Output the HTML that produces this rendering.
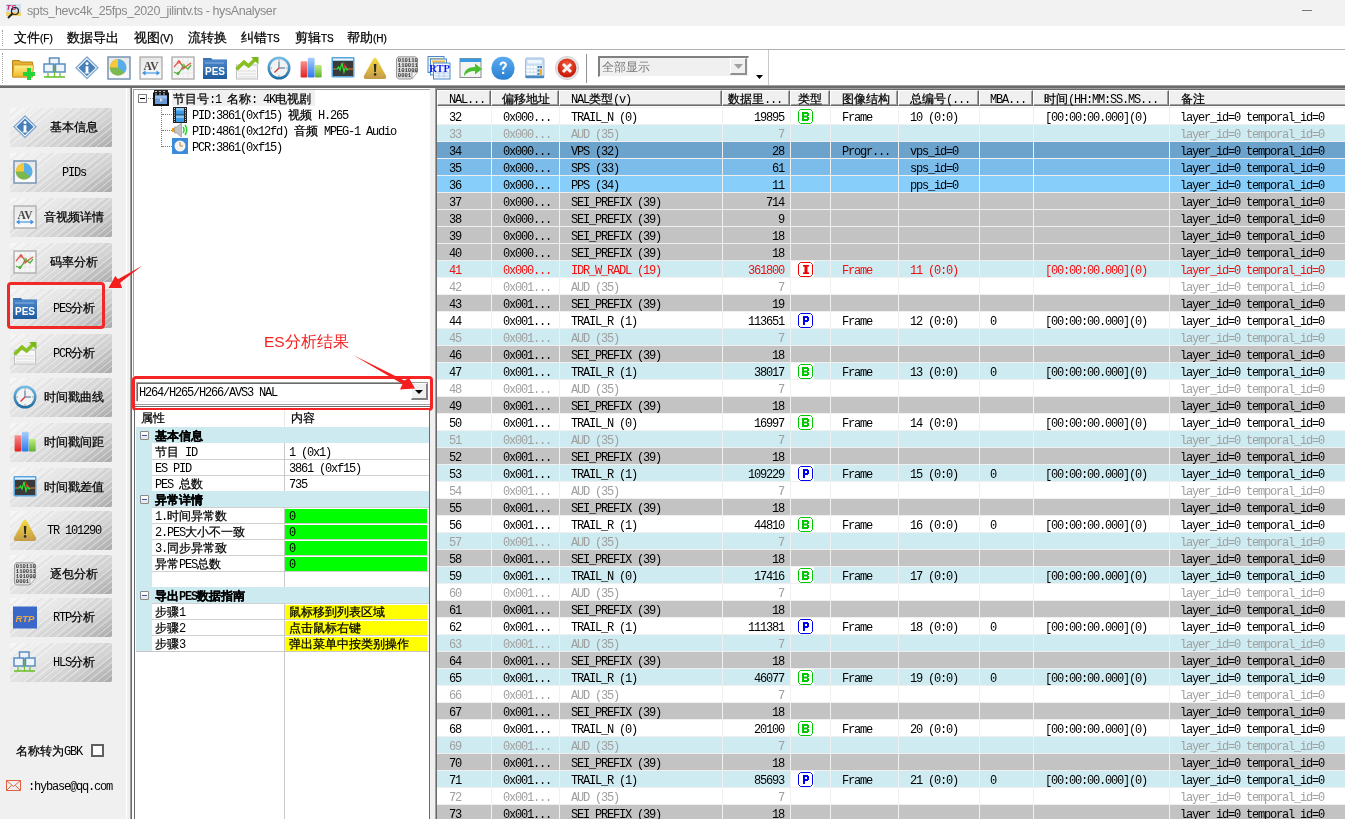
<!DOCTYPE html><html><head><meta charset="utf-8"><style>
*{box-sizing:border-box;margin:0;padding:0}
html,body{width:1345px;height:819px;overflow:hidden;background:#f0f0f0;font-family:"Liberation Sans",sans-serif;}
body{will-change:transform}
div{position:absolute;white-space:nowrap}
.a{font-family:"Liberation Mono",monospace;font-size:12px;letter-spacing:-1.2px}
.c{font-size:12px;font-family:"Liberation Sans",sans-serif;-webkit-text-stroke:0.25px currentColor}
.row{left:437px;width:908px;height:17px;line-height:16px}
.cell{top:0;height:16px;line-height:16px;overflow:hidden}
.nb{left:10px;width:102px;height:39px;background:linear-gradient(150deg,#f6f6f6 0%,#e6e6e6 35%,#d0d0d0 70%,#aaaaaa 100%)}
.nb:before{content:"";position:absolute;left:0;top:0;right:0;bottom:0;background:repeating-linear-gradient(141deg,rgba(255,255,255,0) 0px,rgba(255,255,255,0) 3px,rgba(255,255,255,.45) 4px,rgba(255,255,255,0) 5px),repeating-linear-gradient(141deg,rgba(0,0,0,0) 0px,rgba(0,0,0,0) 5px,rgba(0,0,0,.05) 6px,rgba(0,0,0,0) 7px)}
.nbt{top:0;height:39px;line-height:39px;left:26px;right:0;text-align:center;font-size:12px;color:#000}
svg{position:absolute}
</style></head><body>
<svg width="0" height="0" style="position:absolute"><defs><linearGradient id="gFold" x1="0" y1="0" x2="0" y2="1"><stop offset="0" stop-color="#fff08a"/><stop offset="1" stop-color="#f0b828"/></linearGradient><linearGradient id="gBox" x1="0" y1="0" x2="0" y2="1"><stop offset="0" stop-color="#e6e6e6"/><stop offset="1" stop-color="#fbfbfb"/></linearGradient><linearGradient id="gPes" x1="0" y1="0" x2="0" y2="1"><stop offset="0" stop-color="#4a86c8"/><stop offset="1" stop-color="#1f5a9e"/></linearGradient><linearGradient id="gWarn" x1="0" y1="0" x2="0" y2="1"><stop offset="0" stop-color="#f5dc40"/><stop offset="1" stop-color="#c49a48"/></linearGradient><linearGradient id="gRed" x1="0" y1="0" x2="0" y2="1"><stop offset="0" stop-color="#f89090"/><stop offset="1" stop-color="#e02020"/></linearGradient><linearGradient id="gBlue" x1="0" y1="0" x2="0" y2="1"><stop offset="0" stop-color="#a8d0ff"/><stop offset="1" stop-color="#2a7ae8"/></linearGradient><linearGradient id="gGreen" x1="0" y1="0" x2="0" y2="1"><stop offset="0" stop-color="#c0f080"/><stop offset="1" stop-color="#60b030"/></linearGradient><linearGradient id="gHelp" x1="0" y1="0" x2="0" y2="1"><stop offset="0" stop-color="#5aaaf0"/><stop offset="1" stop-color="#2a80d0"/></linearGradient><radialGradient id="gClose" cx=".5" cy=".35" r=".6"><stop offset="0" stop-color="#f86040"/><stop offset="1" stop-color="#c81808"/></radialGradient><linearGradient id="gClock" x1="0" y1="0" x2="0" y2="1"><stop offset="0" stop-color="#7ac0e8"/><stop offset="1" stop-color="#1a6aa0"/></linearGradient></defs></svg>
<div style="left:0;top:0;width:1345px;height:26px;background:#f2f2f2"></div>
<svg style="left:5px;top:2px" width="17" height="17" viewBox="0 0 17 17"><rect x="1" y="2" width="15" height="12" fill="#cfe0f0"/><rect x="1" y="10" width="15" height="4" fill="#f0d070"/><text x="1" y="8" font-family="Liberation Sans" font-weight="bold" font-style="italic" font-size="8" fill="#d02060">TS</text><circle cx="10" cy="9" r="3.5" fill="none" stroke="#222" stroke-width="1.2"/><path d="M7.5 11.5L3 16" stroke="#222" stroke-width="2"/></svg>
<div style="left:27px;top:4px;font-size:12.5px;letter-spacing:-0.4px;color:#8a8a8a">spts_hevc4k_25fps_2020_jilintv.ts - hysAnalyser</div>
<div style="left:1302px;top:10px;width:10px;height:1px;background:#777"></div>
<div style="left:0;top:26px;width:1345px;height:23px;background:#fff"></div>
<div style="left:0;top:49px;width:1345px;height:1px;background:#b0b0b0"></div>
<div style="left:2px;top:30px;width:1px;height:16px;border-left:1px dotted #a0a0a0"></div>
<div style="left:14px;top:30px;font-size:12.5px;color:#000;-webkit-text-stroke:0.25px #000">文件<span style="font-size:10px">(F)</span></div>
<div style="left:67px;top:30px;font-size:12.5px;color:#000;-webkit-text-stroke:0.25px #000">数据导出<span style="font-size:10px"></span></div>
<div style="left:134px;top:30px;font-size:12.5px;color:#000;-webkit-text-stroke:0.25px #000">视图<span style="font-size:10px">(V)</span></div>
<div style="left:188px;top:30px;font-size:12.5px;color:#000;-webkit-text-stroke:0.25px #000">流转换<span style="font-size:10px"></span></div>
<div style="left:241px;top:30px;font-size:12.5px;color:#000;-webkit-text-stroke:0.25px #000">纠错<span style="font-size:10px">TS</span></div>
<div style="left:295px;top:30px;font-size:12.5px;color:#000;-webkit-text-stroke:0.25px #000">剪辑<span style="font-size:10px">TS</span></div>
<div style="left:347px;top:30px;font-size:12.5px;color:#000;-webkit-text-stroke:0.25px #000">帮助<span style="font-size:10px">(H)</span></div>
<div style="left:0;top:50px;width:1345px;height:36px;background:#fff"></div>
<div style="left:2px;top:53px;width:1px;height:30px;border-left:1px dotted #a0a0a0"></div>
<div style="left:768px;top:50px;width:1px;height:36px;background:#c8c8c8"></div>
<svg style="left:11px;top:56px" width="24" height="24" viewBox="0 0 24 24"><path d="M1.5 4.5h7l1.5 1.5h11.5v15h-20z" fill="#e6b030" stroke="#b88418"/><path d="M3 9h19.5l-1 12H1.5z" fill="url(#gFold)" stroke="#c89420" stroke-width=".8"/><path d="M16 12h4v4h4v4h-4v4h-4v-4h-4v-4h4z" fill="#22d43a"/></svg>
<svg style="left:43px;top:56px" width="24" height="24" viewBox="0 0 24 24"><path d="M1 21h21" stroke="#70c030" stroke-width="1.6"/><path d="M5 17v4M11.5 10v11M17 17v4" stroke="#70c030" stroke-width="1.3"/><rect x="6.5" y="2" width="9.5" height="7" fill="#eef4fa" stroke="#5a8ec0" stroke-width="1.5"/><rect x="1" y="8" width="9.5" height="8" fill="#eef4fa" stroke="#5a8ec0" stroke-width="1.5"/><rect x="12.5" y="8" width="9.5" height="8" fill="#eef4fa" stroke="#5a8ec0" stroke-width="1.5"/></svg>
<svg style="left:75px;top:56px" width="24" height="24" viewBox="0 0 24 24"><path d="M12 .3L23.7 11.8 12 23.3 .3 11.8z" fill="#6a98c8" stroke="#a8c4e0" stroke-width=".6"/><path d="M12 2.6L21.4 11.8 12 21 2.6 11.8z" fill="none" stroke="#f4f8fc" stroke-width="1.1"/><path d="M12 3.8L20.2 11.8 12 19.8 3.8 11.8z" fill="#4a80b8"/><circle cx="12" cy="7.6" r="1.5" fill="#fff"/><path d="M10.6 10.2h2.8v6.2h1v1.1h-4.8v-1.1h1z" fill="#fff"/></svg>
<svg style="left:107px;top:56px" width="24" height="24" viewBox="0 0 24 24"><rect x="1" y="1" width="22" height="22" fill="url(#gBox)" stroke="#7f9ab8" stroke-width="1.6"/><circle cx="11" cy="11.5" r="8.3" fill="#7cb850"/><path d="M11 11.5V3.2a8.3 8.3 0 0 1 6.4 13.6z" fill="#58aee8"/><path d="M11 11.5V3.2a8.3 8.3 0 0 0-8.3 8.3z" fill="#f8c838"/></svg>
<svg style="left:139px;top:56px" width="24" height="24" viewBox="0 0 24 24"><rect x="1" y="1" width="22" height="22" fill="url(#gBox)" stroke="#b0b0b0" stroke-width="1.4"/><text x="12" y="13.5" font-family="Liberation Serif" font-weight="bold" font-size="11.5" text-anchor="middle" fill="#484848">AV</text><path d="M5 17h14" stroke="#60a8e8" stroke-width="1.4"/><path d="M3 17l3.5-2.5v5zM21 17l-3.5-2.5v5z" fill="#3a90e0"/></svg>
<svg style="left:171px;top:56px" width="24" height="24" viewBox="0 0 24 24"><rect x="1" y="1" width="22" height="22" fill="#f6f6f6" stroke="#b0b0b0" stroke-width="1.4"/><path d="M2 7h20M2 12h20M2 17h20M7 2v20M12 2v20M17 2v20" stroke="#e4e4e4" stroke-width=".7"/><path d="M3 11l5-6 5 7 4-3 3-2" stroke="#e05a4a" fill="none" stroke-width="1.3"/><path d="M3 16l4 2 6-8 4 3 3-4" stroke="#58b040" fill="none" stroke-width="1.3"/><circle cx="8" cy="6" r="1.2" fill="none" stroke="#e05a4a"/><circle cx="12" cy="12" r="1.2" fill="none" stroke="#e05a4a"/><circle cx="7" cy="17.5" r="1.2" fill="none" stroke="#58b040"/><circle cx="12.5" cy="9.5" r="1.2" fill="none" stroke="#58b040"/></svg>
<svg style="left:203px;top:56px" width="24" height="24" viewBox="0 0 24 24"><path d="M0 2h8l1.5 1.5H24V23H0z" fill="#3a74b8"/><rect x="0" y="4" width="24" height="19" rx="1" fill="url(#gPes)"/><path d="M2 7h19" stroke="#8ab4e0" stroke-width="1"/><text x="12" y="19" font-family="Liberation Sans" font-weight="bold" font-size="10" text-anchor="middle" fill="#fff">PES</text></svg>
<svg style="left:235px;top:56px" width="24" height="24" viewBox="0 0 24 24"><rect x="1.5" y="9" width="21" height="14" fill="#f8f8f8" stroke="#c0c0c0"/><path d="M3 15h18M3 18h18M3 21h18" stroke="#dcdcdc"/><path d="M1.5 13.5L9 6l4.5 4L20 3.5" stroke="#88c020" stroke-width="3.6" fill="none" stroke-linejoin="round"/><path d="M16 1h7.5v7.5z" fill="#78b818"/></svg>
<svg style="left:267px;top:56px" width="24" height="24" viewBox="0 0 24 24"><circle cx="12" cy="12" r="11.5" fill="url(#gClock)"/><circle cx="12" cy="12" r="9" fill="#f2f2f2"/><path d="M12 12V5.5M12 12h6" stroke="#7a98b0" stroke-width="1.5"/><path d="M12 12l-4.5 4.5" stroke="#d83030" stroke-width="1.2"/><path d="M12 3.5v1.2M12 19.3v1.2M3.5 12h1.2M19.3 12h1.2" stroke="#555" stroke-width=".8"/></svg>
<svg style="left:299px;top:56px" width="24" height="24" viewBox="0 0 24 24"><rect x="1.6" y="5.3" width="6.8" height="16.3" rx="1" fill="url(#gRed)"/><rect x="8.8" y="1.7" width="6.8" height="19.9" rx="1" fill="url(#gBlue)"/><rect x="15.9" y="8.9" width="6.8" height="12.7" rx="1" fill="url(#gGreen)"/></svg>
<svg style="left:331px;top:56px" width="24" height="24" viewBox="0 0 24 24"><rect x=".5" y="1" width="23" height="20.5" rx="1" fill="#5aa4dc"/><rect x="2" y="2.5" width="20" height="2" fill="#eaf4fc"/><rect x="2" y="5" width="20" height="15" fill="#3a3a3a"/><path d="M2 13h4l1.5-2 1.5 3 2-7 2 9 1.5-5 1.5 3 2-1h4" stroke="#30e030" fill="none" stroke-width="1.2"/><path d="M2 12.5h3M12.5 6l1.5 6 1.5-1 1.5 2h5" stroke="#e83030" fill="none" stroke-width="1"/></svg>
<svg style="left:363px;top:56px" width="24" height="24" viewBox="0 0 24 24"><path d="M12 1.8c.9 0 1.5.6 2 1.5l9 16.5c.8 1.6 0 3.2-1.8 3.2H2.8C1 23 .2 21.4 1 19.8l9-16.5c.5-.9 1.1-1.5 2-1.5z" fill="url(#gWarn)"/><path d="M10.8 8h2.6l-.5 8h-1.6z" fill="#2a2a2a"/><circle cx="12.1" cy="18.4" r="1.3" fill="#2a2a2a"/></svg>
<svg style="left:395px;top:56px" width="24" height="24" viewBox="0 0 24 24"><path d="M3 .8h17.5l2 2V16l-6.5 7H3.5L1.5 21V2.8z" fill="#dcdcdc" stroke="#9a9a9a" stroke-width="1"/><path d="M22.5 16H17v7z" fill="#f4f4f4" stroke="#a0a0a0" stroke-width=".8"/><g font-family="Liberation Mono" font-size="5.6" font-weight="bold" fill="#3a3a3a"><text x="2.8" y="6.2">010110</text><text x="2.8" y="11">110011</text><text x="2.8" y="15.8">101000</text><text x="2.8" y="20.6">0001</text></g></svg>
<svg style="left:427px;top:56px" width="24" height="24" viewBox="0 0 24 24"><rect x="1" y=".5" width="16" height="16" fill="#f0f6fc" stroke="#4a8ac8"/><rect x="2.5" y="2" width="13" height="2" fill="#f0b840"/><rect x="3.5" y="3" width="16" height="16" fill="#f0f6fc" stroke="#4a8ac8"/><rect x="5" y="4.5" width="13" height="2" fill="#f0b840"/><rect x="6.5" y="7" width="16.5" height="16" fill="#f0f6fc" stroke="#4a8ac8"/><path d="M8 17h14M8 20h14M12 15v8M17 15v8" stroke="#a8c8e8" stroke-width=".8"/><text x="12.5" y="16" font-family="Liberation Serif" font-weight="bold" font-size="10.5" text-anchor="middle" fill="#0a1ef0">RTP</text></svg>
<svg style="left:459px;top:56px" width="24" height="24" viewBox="0 0 24 24"><rect x="1" y="2.5" width="21" height="19" fill="#f4f4f4" stroke="#8a8a8a"/><rect x="1" y="2.5" width="21" height="3.5" fill="#3a9ae0"/><path d="M5 20c0-6 4.5-9 11-9V7.5l7 5.5-7 5.5V15c-5 0-8.5 1.5-11 5z" fill="#48c030"/></svg>
<svg style="left:491px;top:56px" width="24" height="24" viewBox="0 0 24 24"><rect x=".5" y=".8" width="23" height="23" rx="10.5" fill="url(#gHelp)"/><path d="M8.5 9.2c0-2.3 1.6-3.7 3.7-3.7 2.2 0 3.7 1.3 3.7 3.2 0 2.6-2.8 2.8-2.8 5.3h-2c0-3.3 2.6-3.300 2.6-5.2 0-.8-.6-1.4-1.5-1.4-1 0-1.6.7-1.6 1.8z" fill="#fff"/><rect x="11" y="15.8" width="2.2" height="2.2" fill="#fff"/></svg>
<svg style="left:523px;top:56px" width="24" height="24" viewBox="0 0 24 24"><rect x="2.5" y="2" width="18.5" height="20" rx="1.5" fill="#d4e6f6" stroke="#88aed4" stroke-width=".8"/><rect x="2.5" y="19.5" width="18.5" height="2.5" fill="#4a88c0"/><rect x="4" y="3.5" width="15.5" height="4.5" fill="#eef6fe" stroke="#a8c8e4" stroke-width=".6"/><g fill="#fff"><rect x="4" y="10" width="2.5" height="2"/><rect x="7.5" y="10" width="2.5" height="2"/><rect x="11" y="10" width="2.5" height="2"/><rect x="4" y="13.5" width="2.5" height="2"/><rect x="7.5" y="13.5" width="2.5" height="2"/><rect x="11" y="13.5" width="2.5" height="2"/><rect x="4" y="17" width="2.5" height="2"/><rect x="7.5" y="17" width="2.5" height="2"/><rect x="11" y="17" width="2.5" height="2"/></g><g fill="#4a7ab0"><rect x="14.5" y="10" width="2" height="2"/><rect x="17" y="10" width="2" height="2"/><rect x="14.5" y="13.5" width="2" height="2"/><rect x="14.5" y="17" width="2" height="2"/></g><rect x="17" y="13" width="2" height="6" fill="#f0b020"/></svg>
<svg style="left:555px;top:56px" width="24" height="24" viewBox="0 0 24 24"><circle cx="12" cy="12" r="11.6" fill="#e4e4e4" stroke="#c0c0c0" stroke-width=".6"/><circle cx="12" cy="12" r="9.4" fill="url(#gClose)"/><path d="M8 8l8 8M16 8l-8 8" stroke="#f4f4f4" stroke-width="3"/></svg>
<div style="left:586px;top:54px;width:1px;height:29px;background:#909090"></div>
<div style="left:598px;top:56px;width:151px;height:21px;background:#f0f0f0;border-top:2px solid #808080;border-left:2px solid #808080;border-right:1px solid #fff;border-bottom:1px solid #fff"></div>
<div style="left:602px;top:59px;font-size:12px;color:#777">全部显示</div>
<div style="left:730px;top:58px;width:17px;height:17px;background:#f0f0f0;border-left:1px solid #fff;border-top:1px solid #fff;border-right:2px solid #909090;border-bottom:2px solid #909090"></div>
<svg style="left:734px;top:64px" width="9" height="5" viewBox="0 0 9 5"><path d="M0 0h9L4.5 5z" fill="#a0a0a0"/></svg>
<svg style="left:756px;top:75px" width="7" height="4" viewBox="0 0 7 4"><path d="M0 0h7L3.5 4z" fill="#000"/></svg>
<div style="left:0;top:85px;width:1345px;height:1px;background:#a0a0a0"></div>
<div style="left:0;top:86px;width:1345px;height:2px;background:#6a6a6a"></div>
<div style="left:0;top:88px;width:126px;height:731px;background:#f0f0f0"></div>
<div style="left:126px;top:88px;width:1px;height:731px;background:#fff"></div>
<div class="nb" style="top:108px"><div class="nbt"><span class="c">基本信息</span></div></div>
<svg style="left:13px;top:115px" width="24" height="24" viewBox="0 0 24 24"><path d="M12 .3L23.7 11.8 12 23.3 .3 11.8z" fill="#6a98c8" stroke="#a8c4e0" stroke-width=".6"/><path d="M12 2.6L21.4 11.8 12 21 2.6 11.8z" fill="none" stroke="#f4f8fc" stroke-width="1.1"/><path d="M12 3.8L20.2 11.8 12 19.8 3.8 11.8z" fill="#4a80b8"/><circle cx="12" cy="7.6" r="1.5" fill="#fff"/><path d="M10.6 10.2h2.8v6.2h1v1.1h-4.8v-1.1h1z" fill="#fff"/></svg>
<div class="nb" style="top:153px"><div class="nbt"><span class="a">PIDs</span></div></div>
<svg style="left:13px;top:160px" width="24" height="24" viewBox="0 0 24 24"><rect x="1" y="1" width="22" height="22" fill="url(#gBox)" stroke="#7f9ab8" stroke-width="1.6"/><circle cx="11" cy="11.5" r="8.3" fill="#7cb850"/><path d="M11 11.5V3.2a8.3 8.3 0 0 1 6.4 13.6z" fill="#58aee8"/><path d="M11 11.5V3.2a8.3 8.3 0 0 0-8.3 8.3z" fill="#f8c838"/></svg>
<div class="nb" style="top:198px"><div class="nbt"><span class="c">音视频详情</span></div></div>
<svg style="left:13px;top:205px" width="24" height="24" viewBox="0 0 24 24"><rect x="1" y="1" width="22" height="22" fill="url(#gBox)" stroke="#b0b0b0" stroke-width="1.4"/><text x="12" y="13.5" font-family="Liberation Serif" font-weight="bold" font-size="11.5" text-anchor="middle" fill="#484848">AV</text><path d="M5 17h14" stroke="#60a8e8" stroke-width="1.4"/><path d="M3 17l3.5-2.5v5zM21 17l-3.5-2.5v5z" fill="#3a90e0"/></svg>
<div class="nb" style="top:243px"><div class="nbt"><span class="c">码率分析</span></div></div>
<svg style="left:13px;top:250px" width="24" height="24" viewBox="0 0 24 24"><rect x="1" y="1" width="22" height="22" fill="#f6f6f6" stroke="#b0b0b0" stroke-width="1.4"/><path d="M2 7h20M2 12h20M2 17h20M7 2v20M12 2v20M17 2v20" stroke="#e4e4e4" stroke-width=".7"/><path d="M3 11l5-6 5 7 4-3 3-2" stroke="#e05a4a" fill="none" stroke-width="1.3"/><path d="M3 16l4 2 6-8 4 3 3-4" stroke="#58b040" fill="none" stroke-width="1.3"/><circle cx="8" cy="6" r="1.2" fill="none" stroke="#e05a4a"/><circle cx="12" cy="12" r="1.2" fill="none" stroke="#e05a4a"/><circle cx="7" cy="17.5" r="1.2" fill="none" stroke="#58b040"/><circle cx="12.5" cy="9.5" r="1.2" fill="none" stroke="#58b040"/></svg>
<div class="nb" style="top:289px"><div class="nbt"><span class="a">PES</span><span class="c">分析</span></div></div>
<svg style="left:13px;top:296px" width="24" height="24" viewBox="0 0 24 24"><path d="M0 2h8l1.5 1.5H24V23H0z" fill="#3a74b8"/><rect x="0" y="4" width="24" height="19" rx="1" fill="url(#gPes)"/><path d="M2 7h19" stroke="#8ab4e0" stroke-width="1"/><text x="12" y="19" font-family="Liberation Sans" font-weight="bold" font-size="10" text-anchor="middle" fill="#fff">PES</text></svg>
<div class="nb" style="top:334px"><div class="nbt"><span class="a">PCR</span><span class="c">分析</span></div></div>
<svg style="left:13px;top:341px" width="24" height="24" viewBox="0 0 24 24"><rect x="1.5" y="9" width="21" height="14" fill="#f8f8f8" stroke="#c0c0c0"/><path d="M3 15h18M3 18h18M3 21h18" stroke="#dcdcdc"/><path d="M1.5 13.5L9 6l4.5 4L20 3.5" stroke="#88c020" stroke-width="3.6" fill="none" stroke-linejoin="round"/><path d="M16 1h7.5v7.5z" fill="#78b818"/></svg>
<div class="nb" style="top:378px"><div class="nbt"><span class="c">时间戳曲线</span></div></div>
<svg style="left:13px;top:385px" width="24" height="24" viewBox="0 0 24 24"><circle cx="12" cy="12" r="11.5" fill="url(#gClock)"/><circle cx="12" cy="12" r="9" fill="#f2f2f2"/><path d="M12 12V5.5M12 12h6" stroke="#7a98b0" stroke-width="1.5"/><path d="M12 12l-4.5 4.5" stroke="#d83030" stroke-width="1.2"/><path d="M12 3.5v1.2M12 19.3v1.2M3.5 12h1.2M19.3 12h1.2" stroke="#555" stroke-width=".8"/></svg>
<div class="nb" style="top:423px"><div class="nbt"><span class="c">时间戳间距</span></div></div>
<svg style="left:13px;top:430px" width="24" height="24" viewBox="0 0 24 24"><rect x="1.6" y="5.3" width="6.8" height="16.3" rx="1" fill="url(#gRed)"/><rect x="8.8" y="1.7" width="6.8" height="19.9" rx="1" fill="url(#gBlue)"/><rect x="15.9" y="8.9" width="6.8" height="12.7" rx="1" fill="url(#gGreen)"/></svg>
<div class="nb" style="top:468px"><div class="nbt"><span class="c">时间戳差值</span></div></div>
<svg style="left:13px;top:475px" width="24" height="24" viewBox="0 0 24 24"><rect x=".5" y="1" width="23" height="20.5" rx="1" fill="#5aa4dc"/><rect x="2" y="2.5" width="20" height="2" fill="#eaf4fc"/><rect x="2" y="5" width="20" height="15" fill="#3a3a3a"/><path d="M2 13h4l1.5-2 1.5 3 2-7 2 9 1.5-5 1.5 3 2-1h4" stroke="#30e030" fill="none" stroke-width="1.2"/><path d="M2 12.5h3M12.5 6l1.5 6 1.5-1 1.5 2h5" stroke="#e83030" fill="none" stroke-width="1"/></svg>
<div class="nb" style="top:511px"><div class="nbt"><span class="a">TR&nbsp;101290</span></div></div>
<svg style="left:13px;top:518px" width="24" height="24" viewBox="0 0 24 24"><path d="M12 1.8c.9 0 1.5.6 2 1.5l9 16.5c.8 1.6 0 3.2-1.8 3.2H2.8C1 23 .2 21.4 1 19.8l9-16.5c.5-.9 1.1-1.5 2-1.5z" fill="url(#gWarn)"/><path d="M10.8 8h2.6l-.5 8h-1.6z" fill="#2a2a2a"/><circle cx="12.1" cy="18.4" r="1.3" fill="#2a2a2a"/></svg>
<div class="nb" style="top:555px"><div class="nbt"><span class="c">逐包分析</span></div></div>
<svg style="left:13px;top:562px" width="24" height="24" viewBox="0 0 24 24"><path d="M3 .8h17.5l2 2V16l-6.5 7H3.5L1.5 21V2.8z" fill="#dcdcdc" stroke="#9a9a9a" stroke-width="1"/><path d="M22.5 16H17v7z" fill="#f4f4f4" stroke="#a0a0a0" stroke-width=".8"/><g font-family="Liberation Mono" font-size="5.6" font-weight="bold" fill="#3a3a3a"><text x="2.8" y="6.2">010110</text><text x="2.8" y="11">110011</text><text x="2.8" y="15.8">101000</text><text x="2.8" y="20.6">0001</text></g></svg>
<div class="nb" style="top:598px"><div class="nbt"><span class="a">RTP</span><span class="c">分析</span></div></div>
<svg style="left:13px;top:605px" width="24" height="24" viewBox="0 0 24 24"><rect x="0" y="1.5" width="24" height="22" fill="#3a68c8"/><text x="12" y="16.5" font-family="Liberation Sans" font-style="italic" font-weight="bold" font-size="9.5" text-anchor="middle" fill="#f5a838">RTP</text></svg>
<div class="nb" style="top:643px"><div class="nbt"><span class="a">HLS</span><span class="c">分析</span></div></div>
<svg style="left:13px;top:650px" width="24" height="24" viewBox="0 0 24 24"><path d="M1 21h21" stroke="#70c030" stroke-width="1.6"/><path d="M5 17v4M11.5 10v11M17 17v4" stroke="#70c030" stroke-width="1.3"/><rect x="6.5" y="2" width="9.5" height="7" fill="#eef4fa" stroke="#5a8ec0" stroke-width="1.5"/><rect x="1" y="8" width="9.5" height="8" fill="#eef4fa" stroke="#5a8ec0" stroke-width="1.5"/><rect x="12.5" y="8" width="9.5" height="8" fill="#eef4fa" stroke="#5a8ec0" stroke-width="1.5"/></svg>
<div style="left:7px;top:282px;width:98px;height:47px;border:3px solid #f02828;border-radius:4px"></div>
<div style="left:16px;top:743px;font-size:12px;color:#000"><span class="c">名称转为</span><span class="a">GBK</span></div>
<div style="left:91px;top:744px;width:13px;height:13px;background:#fff;border:2px solid #606060"></div>
<svg style="left:6px;top:780px" width="15" height="11" viewBox="0 0 15 11"><path d="M.5 .5h14v10H.5zM.5 .5l7 6 7-6M.5 10.5l5-5M14.5 10.5l-5-5" fill="none" stroke="#e06040" stroke-width="1"/></svg>
<div style="left:28px;top:776px;color:#000"><span class="a">:hybase@qq.com</span></div>
<div style="left:127px;top:88px;width:3px;height:731px;background:#f0f0f0"></div>
<div style="left:130px;top:88px;width:1px;height:731px;background:#a0a0a0"></div>
<div style="left:131px;top:88px;width:1px;height:731px;background:#6a6a6a"></div>
<div style="left:132px;top:88px;width:300px;height:731px;background:#fff"></div>
<div style="left:133px;top:89px;width:299px;height:287px;border-top:1px solid #a0a0a0;border-left:1px solid #a0a0a0;background:#fff"></div>
<div style="left:138px;top:94px;width:9px;height:9px;border:1px solid #808080;background:#fff"></div>
<div style="left:140px;top:98px;width:5px;height:1px;background:#000"></div>
<div style="left:148px;top:98px;width:5px;height:1px;border-top:1px dotted #808080"></div>
<div style="left:161px;top:106px;width:1px;height:41px;border-left:1px dotted #808080"></div>
<div style="left:162px;top:114px;width:10px;height:1px;border-top:1px dotted #808080"></div>
<div style="left:162px;top:130px;width:10px;height:1px;border-top:1px dotted #808080"></div>
<div style="left:162px;top:146px;width:10px;height:1px;border-top:1px dotted #808080"></div>
<svg style="left:153px;top:90px" width="16" height="16" viewBox="0 0 16 16"><rect x="0" y="2.5" width="16" height="13.5" fill="#111"/><rect x="1" y="0" width="14" height="3" fill="#222"/><path d="M2 1.5h2M6 1.5h2M10 1.5h2M2 4h2M6 4h2M10 4h2" stroke="#ccc" stroke-width="1"/><rect x="2" y="5.5" width="12" height="8.5" fill="#6a9ad8"/><rect x="2" y="5.5" width="12" height="3" fill="#9ac0f0"/><path d="M7 8l3 2-3 2z" fill="#dde"/></svg>
<div style="left:172px;top:90px;width:143px;height:16px;background:#f0f0f0"></div>
<div style="left:173px;top:90px;line-height:16px"><span class="c">节目号</span><span class="a">:1&nbsp;</span><span class="c">名称</span><span class="a">:&nbsp;4K</span><span class="c">电视剧</span></div>
<svg style="left:173px;top:107px" width="14" height="16" viewBox="0 0 14 16"><rect x="0" y="0" width="14" height="16" fill="#222"/><rect x="3" y="1" width="8" height="6.5" fill="#3a9ae8"/><rect x="3" y="1" width="8" height="2.5" fill="#8ac8f8"/><rect x="3" y="8.5" width="8" height="6.5" fill="#3a9ae8"/><rect x="3" y="8.5" width="8" height="2.5" fill="#8ac8f8"/><path d="M1.5 1v14M12.5 1v14" stroke="#ddd" stroke-width="1" stroke-dasharray="1 1.2"/></svg>
<div style="left:192px;top:106px;line-height:16px"><span class="a">PID:3861(0xf15)&nbsp;</span><span class="c">视频</span><span class="a">&nbsp;H.265</span></div>
<svg style="left:172px;top:122px" width="17" height="16" viewBox="0 0 17 16"><rect x="0" y="6" width="3" height="4" fill="#f0a020"/><path d="M2.5 5h2l5-4v14l-5-4h-2z" fill="#c4c4c4" stroke="#8a8a8a" stroke-width=".6"/><path d="M11 5q2 3 0 6M13 3q3.5 5 0 10" stroke="#38d038" stroke-width="1.6" fill="none"/></svg>
<div style="left:192px;top:122px;line-height:16px"><span class="a">PID:4861(0x12fd)&nbsp;</span><span class="c">音频</span><span class="a">&nbsp;MPEG-1&nbsp;Audio</span></div>
<svg style="left:172px;top:138px" width="16" height="16" viewBox="0 0 16 16"><rect x="0" y="0" width="16" height="16" fill="#3a8ad8"/><circle cx="8" cy="8" r="5.5" fill="#f4f4f4"/><path d="M8 8V4M8 8h3" stroke="#c08040" stroke-width="1"/></svg>
<div style="left:192px;top:138px;line-height:16px"><span class="a">PCR:3861(0xf15)</span></div>
<div style="left:430px;top:88px;width:2px;height:731px;background:#f0f0f0"></div>
<div style="left:432px;top:88px;width:3px;height:731px;background:#f0f0f0"></div>
<div style="left:264px;top:332px;font-size:15.5px;color:#f52020">ES分析结果</div>
<div style="left:133px;top:376px;width:299px;height:35px;background:#fff"></div>
<div style="left:136px;top:400px;width:293px;height:2px;background:#f0f0f0"></div>
<div style="left:136px;top:382px;width:292px;height:19px;background:#fff;border-top:1px solid #a0a0a0;border-left:1px solid #a0a0a0;box-shadow:inset 1px 1px 0 #6a6a6a"></div>
<div style="left:139px;top:383px;line-height:16px"><span class="a">H264/H265/H266/AVS3&nbsp;NAL</span></div>
<div style="left:411px;top:383px;width:17px;height:17px;background:#f0f0f0;border-left:1px solid #fff;border-top:1px solid #fff;border-right:2px solid #808080;border-bottom:2px solid #808080"></div>
<svg style="left:415px;top:390px" width="8" height="4" viewBox="0 0 8 4"><path d="M0 0h8L4 4z" fill="#000"/></svg>
<div style="left:134px;top:404px;width:296px;height:1px;background:#a0a0a0"></div>
<div style="left:134px;top:406px;width:296px;height:1px;background:#6a6a6a"></div>
<div style="left:132px;top:376px;width:301px;height:35px;border:3px solid #f52525;border-radius:4px"></div>
<div style="left:134px;top:410px;width:296px;height:409px;background:#fff;border-left:1px solid #6a6a6a;border-right:1px solid #6a6a6a"></div>
<div style="left:141px;top:409px;line-height:16px"><span class="c">属性</span></div>
<div style="left:291px;top:409px;line-height:16px"><span class="c">内容</span></div>
<div style="left:284px;top:410px;width:1px;height:17px;background:#e8e8e8"></div>
<div style="left:136px;top:427px;width:16px;height:224px;background:#cdeaf1"></div>
<div style="left:136px;top:427px;width:293px;height:16px;background:#cdeaf1"></div>
<div style="left:140px;top:431px;width:9px;height:9px;border:1px solid #8a8a8a;border-radius:1px;background:linear-gradient(#fff,#e4e4e4)"></div>
<div style="left:142px;top:435px;width:5px;height:1px;background:#3a58b0"></div>
<div style="left:155px;top:427px;line-height:16px;font-weight:bold"><span class="c">基本信息</span></div>
<div style="left:155px;top:443px;line-height:16px"><span class="c">节目</span><span class="a">&nbsp;ID</span></div>
<div style="left:289px;top:443px;line-height:16px"><span class="a">1&nbsp;(0x1)</span></div>
<div style="left:152px;top:459px;width:277px;height:1px;background:#d0d0d0"></div>
<div style="left:155px;top:459px;line-height:16px"><span class="a">ES&nbsp;PID</span></div>
<div style="left:289px;top:459px;line-height:16px"><span class="a">3861&nbsp;(0xf15)</span></div>
<div style="left:152px;top:475px;width:277px;height:1px;background:#d0d0d0"></div>
<div style="left:155px;top:475px;line-height:16px"><span class="a">PES&nbsp;</span><span class="c">总数</span></div>
<div style="left:289px;top:475px;line-height:16px"><span class="a">735</span></div>
<div style="left:136px;top:491px;width:293px;height:16px;background:#cdeaf1"></div>
<div style="left:140px;top:495px;width:9px;height:9px;border:1px solid #8a8a8a;border-radius:1px;background:linear-gradient(#fff,#e4e4e4)"></div>
<div style="left:142px;top:499px;width:5px;height:1px;background:#3a58b0"></div>
<div style="left:155px;top:491px;line-height:16px;font-weight:bold"><span class="c">异常详情</span></div>
<div style="left:152px;top:507px;width:277px;height:1px;background:#d0d0d0"></div>
<div style="left:155px;top:507px;line-height:16px"><span class="a">1.</span><span class="c">时间异常数</span></div>
<div style="left:285px;top:509px;width:142px;height:14px;background:#00ff00"></div>
<div style="left:289px;top:507px;line-height:16px"><span class="a">0</span></div>
<div style="left:152px;top:523px;width:277px;height:1px;background:#d0d0d0"></div>
<div style="left:155px;top:523px;line-height:16px"><span class="a">2.PES</span><span class="c">大小不一致</span></div>
<div style="left:285px;top:525px;width:142px;height:14px;background:#00ff00"></div>
<div style="left:289px;top:523px;line-height:16px"><span class="a">0</span></div>
<div style="left:152px;top:539px;width:277px;height:1px;background:#d0d0d0"></div>
<div style="left:155px;top:539px;line-height:16px"><span class="a">3.</span><span class="c">同步异常致</span></div>
<div style="left:285px;top:541px;width:142px;height:14px;background:#00ff00"></div>
<div style="left:289px;top:539px;line-height:16px"><span class="a">0</span></div>
<div style="left:152px;top:555px;width:277px;height:1px;background:#d0d0d0"></div>
<div style="left:155px;top:555px;line-height:16px"><span class="c">异常</span><span class="a">PES</span><span class="c">总数</span></div>
<div style="left:285px;top:557px;width:142px;height:14px;background:#00ff00"></div>
<div style="left:289px;top:555px;line-height:16px"><span class="a">0</span></div>
<div style="left:152px;top:571px;width:277px;height:1px;background:#d0d0d0"></div>
<div style="left:155px;top:571px;line-height:16px"></div>
<div style="left:289px;top:571px;line-height:16px"></div>
<div style="left:136px;top:587px;width:293px;height:16px;background:#cdeaf1"></div>
<div style="left:140px;top:591px;width:9px;height:9px;border:1px solid #8a8a8a;border-radius:1px;background:linear-gradient(#fff,#e4e4e4)"></div>
<div style="left:142px;top:595px;width:5px;height:1px;background:#3a58b0"></div>
<div style="left:155px;top:587px;line-height:16px;font-weight:bold"><span class="c">导出</span><span class="a">PES</span><span class="c">数据指南</span></div>
<div style="left:152px;top:603px;width:277px;height:1px;background:#d0d0d0"></div>
<div style="left:155px;top:603px;line-height:16px"><span class="c">步骤</span><span class="a">1</span></div>
<div style="left:285px;top:605px;width:142px;height:14px;background:#ffff00"></div>
<div style="left:289px;top:603px;line-height:16px"><span class="c">鼠标移到列表区域</span></div>
<div style="left:152px;top:619px;width:277px;height:1px;background:#d0d0d0"></div>
<div style="left:155px;top:619px;line-height:16px"><span class="c">步骤</span><span class="a">2</span></div>
<div style="left:285px;top:621px;width:142px;height:14px;background:#ffff00"></div>
<div style="left:289px;top:619px;line-height:16px"><span class="c">点击鼠标右键</span></div>
<div style="left:152px;top:635px;width:277px;height:1px;background:#d0d0d0"></div>
<div style="left:155px;top:635px;line-height:16px"><span class="c">步骤</span><span class="a">3</span></div>
<div style="left:285px;top:637px;width:142px;height:14px;background:#ffff00"></div>
<div style="left:289px;top:635px;line-height:16px"><span class="c">弹出菜单中按类别操作</span></div>
<div style="left:136px;top:651px;width:293px;height:1px;background:#c8c8c8"></div>
<div style="left:284px;top:443px;width:1px;height:16px;background:#c8c8c8"></div>
<div style="left:284px;top:459px;width:1px;height:16px;background:#c8c8c8"></div>
<div style="left:284px;top:475px;width:1px;height:16px;background:#c8c8c8"></div>
<div style="left:284px;top:507px;width:1px;height:16px;background:#c8c8c8"></div>
<div style="left:284px;top:523px;width:1px;height:16px;background:#c8c8c8"></div>
<div style="left:284px;top:539px;width:1px;height:16px;background:#c8c8c8"></div>
<div style="left:284px;top:555px;width:1px;height:16px;background:#c8c8c8"></div>
<div style="left:284px;top:571px;width:1px;height:16px;background:#c8c8c8"></div>
<div style="left:284px;top:603px;width:1px;height:16px;background:#c8c8c8"></div>
<div style="left:284px;top:619px;width:1px;height:16px;background:#c8c8c8"></div>
<div style="left:284px;top:635px;width:1px;height:16px;background:#c8c8c8"></div>
<div style="left:284px;top:651px;width:1px;height:168px;background:#c8c8c8"></div>
<div style="left:435px;top:88px;width:910px;height:731px;background:#fff;border-left:1px solid #a0a0a0;border-top:1px solid #a0a0a0"></div>
<div style="left:436px;top:89px;width:909px;height:730px;border-left:1px solid #6a6a6a;border-top:1px solid #6a6a6a"></div>
<div style="left:437px;top:90px;width:54px;height:16px;background:#f0f0f0;border-left:1px solid #fff;border-top:1px solid #fff;border-right:1px solid #6a6a6a;border-bottom:1px solid #6a6a6a;box-shadow:inset -1px -1px 0 #a0a0a0"></div>
<div style="left:449px;top:89px;line-height:17px"><span class="a">NAL...</span></div>
<div style="left:491px;top:90px;width:68px;height:16px;background:#f0f0f0;border-left:1px solid #fff;border-top:1px solid #fff;border-right:1px solid #6a6a6a;border-bottom:1px solid #6a6a6a;box-shadow:inset -1px -1px 0 #a0a0a0"></div>
<div style="left:502px;top:89px;line-height:17px"><span class="c">偏移地址</span></div>
<div style="left:559px;top:90px;width:163px;height:16px;background:#f0f0f0;border-left:1px solid #fff;border-top:1px solid #fff;border-right:1px solid #6a6a6a;border-bottom:1px solid #6a6a6a;box-shadow:inset -1px -1px 0 #a0a0a0"></div>
<div style="left:571px;top:89px;line-height:17px"><span class="a">NAL</span><span class="c">类型</span><span class="a">(v)</span></div>
<div style="left:722px;top:90px;width:68px;height:16px;background:#f0f0f0;border-left:1px solid #fff;border-top:1px solid #fff;border-right:1px solid #6a6a6a;border-bottom:1px solid #6a6a6a;box-shadow:inset -1px -1px 0 #a0a0a0"></div>
<div style="left:728px;top:89px;line-height:17px"><span class="c">数据里</span><span class="a">...</span></div>
<div style="left:790px;top:90px;width:40px;height:16px;background:#f0f0f0;border-left:1px solid #fff;border-top:1px solid #fff;border-right:1px solid #6a6a6a;border-bottom:1px solid #6a6a6a;box-shadow:inset -1px -1px 0 #a0a0a0"></div>
<div style="left:798px;top:89px;line-height:17px"><span class="c">类型</span></div>
<div style="left:830px;top:90px;width:68px;height:16px;background:#f0f0f0;border-left:1px solid #fff;border-top:1px solid #fff;border-right:1px solid #6a6a6a;border-bottom:1px solid #6a6a6a;box-shadow:inset -1px -1px 0 #a0a0a0"></div>
<div style="left:842px;top:89px;line-height:17px"><span class="c">图像结构</span></div>
<div style="left:898px;top:90px;width:81px;height:16px;background:#f0f0f0;border-left:1px solid #fff;border-top:1px solid #fff;border-right:1px solid #6a6a6a;border-bottom:1px solid #6a6a6a;box-shadow:inset -1px -1px 0 #a0a0a0"></div>
<div style="left:910px;top:89px;line-height:17px"><span class="c">总编号</span><span class="a">(...</span></div>
<div style="left:979px;top:90px;width:54px;height:16px;background:#f0f0f0;border-left:1px solid #fff;border-top:1px solid #fff;border-right:1px solid #6a6a6a;border-bottom:1px solid #6a6a6a;box-shadow:inset -1px -1px 0 #a0a0a0"></div>
<div style="left:990px;top:89px;line-height:17px"><span class="a">MBA...</span></div>
<div style="left:1033px;top:90px;width:136px;height:16px;background:#f0f0f0;border-left:1px solid #fff;border-top:1px solid #fff;border-right:1px solid #6a6a6a;border-bottom:1px solid #6a6a6a;box-shadow:inset -1px -1px 0 #a0a0a0"></div>
<div style="left:1044px;top:89px;line-height:17px"><span class="c">时间</span><span class="a">(HH:MM:SS.MS...</span></div>
<div style="left:1169px;top:90px;width:231px;height:16px;background:#f0f0f0;border-left:1px solid #fff;border-top:1px solid #fff;border-right:1px solid #6a6a6a;border-bottom:1px solid #6a6a6a;box-shadow:inset -1px -1px 0 #a0a0a0"></div>
<div style="left:1181px;top:89px;line-height:17px"><span class="c">备注</span></div>
<div style="left:437px;top:107px;width:908px;height:1px;background:#f0f0f0"></div>
<div class="row" style="top:108px;background:#ffffff;color:#000">
<div style="left:0;top:16px;width:908px;height:1px;background:#f0f0f0"></div>
<div style="left:54px;top:0;width:1px;height:16px;background:#f0f0f0"></div>
<div style="left:122px;top:0;width:1px;height:16px;background:#f0f0f0"></div>
<div style="left:285px;top:0;width:1px;height:16px;background:#f0f0f0"></div>
<div style="left:353px;top:0;width:1px;height:16px;background:#f0f0f0"></div>
<div style="left:393px;top:0;width:1px;height:16px;background:#f0f0f0"></div>
<div style="left:461px;top:0;width:1px;height:16px;background:#f0f0f0"></div>
<div style="left:542px;top:0;width:1px;height:16px;background:#f0f0f0"></div>
<div style="left:596px;top:0;width:1px;height:16px;background:#f0f0f0"></div>
<div style="left:732px;top:0;width:1px;height:16px;background:#f0f0f0"></div>
<div style="left:12px;top:0;line-height:16px"><span class="a">32</span></div>
<div style="left:66px;top:0;line-height:16px"><span class="a">0x000...</span></div>
<div style="left:134px;top:0;line-height:16px"><span class="a">TRAIL_N&nbsp;(0)</span></div>
<div style="left:285px;top:0;width:62px;text-align:right;line-height:16px"><span class="a">19895</span></div>
<div style="left:354px;top:0;width:23px;height:16px;background:#fff"></div>
<svg style="left:361px;top:0" width="16" height="16" viewBox="0 0 16 16"><path d="M2.5 1.5H12.5L14.5 3.5V13.5L12.5 15.5H2.5L0.5 13.5V3.5Z" fill="#fff" stroke="#00c800" stroke-width="1"/><g fill="#00c800"><rect x="4" y="4" width="2" height="9"/><rect x="4" y="4" width="6" height="2"/><rect x="9" y="5" width="2" height="3"/><rect x="4" y="7.5" width="6" height="2"/><rect x="9" y="9" width="2" height="3"/><rect x="4" y="11" width="6" height="2"/></g></svg>
<div style="left:405px;top:0;line-height:16px"><span class="a">Frame</span></div>
<div style="left:473px;top:0;line-height:16px"><span class="a">10&nbsp;(0:0)</span></div>
<div style="left:608px;top:0;line-height:16px"><span class="a">[00:00:00.000](0)</span></div>
<div style="left:743px;top:0;line-height:16px"><span class="a">layer_id=0&nbsp;temporal_id=0</span></div>
</div>
<div class="row" style="top:125px;background:#cdebf1;color:#a0a0a0">
<div style="left:0;top:16px;width:908px;height:1px;background:#f0f0f0"></div>
<div style="left:54px;top:0;width:1px;height:16px;background:#f0f0f0"></div>
<div style="left:122px;top:0;width:1px;height:16px;background:#f0f0f0"></div>
<div style="left:285px;top:0;width:1px;height:16px;background:#f0f0f0"></div>
<div style="left:353px;top:0;width:1px;height:16px;background:#f0f0f0"></div>
<div style="left:393px;top:0;width:1px;height:16px;background:#f0f0f0"></div>
<div style="left:461px;top:0;width:1px;height:16px;background:#f0f0f0"></div>
<div style="left:542px;top:0;width:1px;height:16px;background:#f0f0f0"></div>
<div style="left:596px;top:0;width:1px;height:16px;background:#f0f0f0"></div>
<div style="left:732px;top:0;width:1px;height:16px;background:#f0f0f0"></div>
<div style="left:12px;top:0;line-height:16px"><span class="a">33</span></div>
<div style="left:66px;top:0;line-height:16px"><span class="a">0x000...</span></div>
<div style="left:134px;top:0;line-height:16px"><span class="a">AUD&nbsp;(35)</span></div>
<div style="left:285px;top:0;width:62px;text-align:right;line-height:16px"><span class="a">7</span></div>
<div style="left:743px;top:0;line-height:16px"><span class="a">layer_id=0&nbsp;temporal_id=0</span></div>
</div>
<div class="row" style="top:142px;background:#6ca3cc;color:#000">
<div style="left:0;top:16px;width:908px;height:1px;background:#f0f0f0"></div>
<div style="left:54px;top:0;width:1px;height:16px;background:#f0f0f0"></div>
<div style="left:122px;top:0;width:1px;height:16px;background:#f0f0f0"></div>
<div style="left:285px;top:0;width:1px;height:16px;background:#f0f0f0"></div>
<div style="left:353px;top:0;width:1px;height:16px;background:#f0f0f0"></div>
<div style="left:393px;top:0;width:1px;height:16px;background:#f0f0f0"></div>
<div style="left:461px;top:0;width:1px;height:16px;background:#f0f0f0"></div>
<div style="left:542px;top:0;width:1px;height:16px;background:#f0f0f0"></div>
<div style="left:596px;top:0;width:1px;height:16px;background:#f0f0f0"></div>
<div style="left:732px;top:0;width:1px;height:16px;background:#f0f0f0"></div>
<div style="left:12px;top:0;line-height:16px"><span class="a">34</span></div>
<div style="left:66px;top:0;line-height:16px"><span class="a">0x000...</span></div>
<div style="left:134px;top:0;line-height:16px"><span class="a">VPS&nbsp;(32)</span></div>
<div style="left:285px;top:0;width:62px;text-align:right;line-height:16px"><span class="a">28</span></div>
<div style="left:405px;top:0;line-height:16px"><span class="a">Progr...</span></div>
<div style="left:473px;top:0;line-height:16px"><span class="a">vps_id=0</span></div>
<div style="left:743px;top:0;line-height:16px"><span class="a">layer_id=0&nbsp;temporal_id=0</span></div>
</div>
<div class="row" style="top:159px;background:#7bbcea;color:#000">
<div style="left:0;top:16px;width:908px;height:1px;background:#f0f0f0"></div>
<div style="left:54px;top:0;width:1px;height:16px;background:#f0f0f0"></div>
<div style="left:122px;top:0;width:1px;height:16px;background:#f0f0f0"></div>
<div style="left:285px;top:0;width:1px;height:16px;background:#f0f0f0"></div>
<div style="left:353px;top:0;width:1px;height:16px;background:#f0f0f0"></div>
<div style="left:393px;top:0;width:1px;height:16px;background:#f0f0f0"></div>
<div style="left:461px;top:0;width:1px;height:16px;background:#f0f0f0"></div>
<div style="left:542px;top:0;width:1px;height:16px;background:#f0f0f0"></div>
<div style="left:596px;top:0;width:1px;height:16px;background:#f0f0f0"></div>
<div style="left:732px;top:0;width:1px;height:16px;background:#f0f0f0"></div>
<div style="left:12px;top:0;line-height:16px"><span class="a">35</span></div>
<div style="left:66px;top:0;line-height:16px"><span class="a">0x000...</span></div>
<div style="left:134px;top:0;line-height:16px"><span class="a">SPS&nbsp;(33)</span></div>
<div style="left:285px;top:0;width:62px;text-align:right;line-height:16px"><span class="a">61</span></div>
<div style="left:473px;top:0;line-height:16px"><span class="a">sps_id=0</span></div>
<div style="left:743px;top:0;line-height:16px"><span class="a">layer_id=0&nbsp;temporal_id=0</span></div>
</div>
<div class="row" style="top:176px;background:#87cefa;color:#000">
<div style="left:0;top:16px;width:908px;height:1px;background:#f0f0f0"></div>
<div style="left:54px;top:0;width:1px;height:16px;background:#f0f0f0"></div>
<div style="left:122px;top:0;width:1px;height:16px;background:#f0f0f0"></div>
<div style="left:285px;top:0;width:1px;height:16px;background:#f0f0f0"></div>
<div style="left:353px;top:0;width:1px;height:16px;background:#f0f0f0"></div>
<div style="left:393px;top:0;width:1px;height:16px;background:#f0f0f0"></div>
<div style="left:461px;top:0;width:1px;height:16px;background:#f0f0f0"></div>
<div style="left:542px;top:0;width:1px;height:16px;background:#f0f0f0"></div>
<div style="left:596px;top:0;width:1px;height:16px;background:#f0f0f0"></div>
<div style="left:732px;top:0;width:1px;height:16px;background:#f0f0f0"></div>
<div style="left:12px;top:0;line-height:16px"><span class="a">36</span></div>
<div style="left:66px;top:0;line-height:16px"><span class="a">0x000...</span></div>
<div style="left:134px;top:0;line-height:16px"><span class="a">PPS&nbsp;(34)</span></div>
<div style="left:285px;top:0;width:62px;text-align:right;line-height:16px"><span class="a">11</span></div>
<div style="left:473px;top:0;line-height:16px"><span class="a">pps_id=0</span></div>
<div style="left:743px;top:0;line-height:16px"><span class="a">layer_id=0&nbsp;temporal_id=0</span></div>
</div>
<div class="row" style="top:193px;background:#c3c3c3;color:#000">
<div style="left:0;top:16px;width:908px;height:1px;background:#f0f0f0"></div>
<div style="left:54px;top:0;width:1px;height:16px;background:#f0f0f0"></div>
<div style="left:122px;top:0;width:1px;height:16px;background:#f0f0f0"></div>
<div style="left:285px;top:0;width:1px;height:16px;background:#f0f0f0"></div>
<div style="left:353px;top:0;width:1px;height:16px;background:#f0f0f0"></div>
<div style="left:393px;top:0;width:1px;height:16px;background:#f0f0f0"></div>
<div style="left:461px;top:0;width:1px;height:16px;background:#f0f0f0"></div>
<div style="left:542px;top:0;width:1px;height:16px;background:#f0f0f0"></div>
<div style="left:596px;top:0;width:1px;height:16px;background:#f0f0f0"></div>
<div style="left:732px;top:0;width:1px;height:16px;background:#f0f0f0"></div>
<div style="left:12px;top:0;line-height:16px"><span class="a">37</span></div>
<div style="left:66px;top:0;line-height:16px"><span class="a">0x000...</span></div>
<div style="left:134px;top:0;line-height:16px"><span class="a">SEI_PREFIX&nbsp;(39)</span></div>
<div style="left:285px;top:0;width:62px;text-align:right;line-height:16px"><span class="a">714</span></div>
<div style="left:743px;top:0;line-height:16px"><span class="a">layer_id=0&nbsp;temporal_id=0</span></div>
</div>
<div class="row" style="top:210px;background:#c3c3c3;color:#000">
<div style="left:0;top:16px;width:908px;height:1px;background:#f0f0f0"></div>
<div style="left:54px;top:0;width:1px;height:16px;background:#f0f0f0"></div>
<div style="left:122px;top:0;width:1px;height:16px;background:#f0f0f0"></div>
<div style="left:285px;top:0;width:1px;height:16px;background:#f0f0f0"></div>
<div style="left:353px;top:0;width:1px;height:16px;background:#f0f0f0"></div>
<div style="left:393px;top:0;width:1px;height:16px;background:#f0f0f0"></div>
<div style="left:461px;top:0;width:1px;height:16px;background:#f0f0f0"></div>
<div style="left:542px;top:0;width:1px;height:16px;background:#f0f0f0"></div>
<div style="left:596px;top:0;width:1px;height:16px;background:#f0f0f0"></div>
<div style="left:732px;top:0;width:1px;height:16px;background:#f0f0f0"></div>
<div style="left:12px;top:0;line-height:16px"><span class="a">38</span></div>
<div style="left:66px;top:0;line-height:16px"><span class="a">0x000...</span></div>
<div style="left:134px;top:0;line-height:16px"><span class="a">SEI_PREFIX&nbsp;(39)</span></div>
<div style="left:285px;top:0;width:62px;text-align:right;line-height:16px"><span class="a">9</span></div>
<div style="left:743px;top:0;line-height:16px"><span class="a">layer_id=0&nbsp;temporal_id=0</span></div>
</div>
<div class="row" style="top:227px;background:#c3c3c3;color:#000">
<div style="left:0;top:16px;width:908px;height:1px;background:#f0f0f0"></div>
<div style="left:54px;top:0;width:1px;height:16px;background:#f0f0f0"></div>
<div style="left:122px;top:0;width:1px;height:16px;background:#f0f0f0"></div>
<div style="left:285px;top:0;width:1px;height:16px;background:#f0f0f0"></div>
<div style="left:353px;top:0;width:1px;height:16px;background:#f0f0f0"></div>
<div style="left:393px;top:0;width:1px;height:16px;background:#f0f0f0"></div>
<div style="left:461px;top:0;width:1px;height:16px;background:#f0f0f0"></div>
<div style="left:542px;top:0;width:1px;height:16px;background:#f0f0f0"></div>
<div style="left:596px;top:0;width:1px;height:16px;background:#f0f0f0"></div>
<div style="left:732px;top:0;width:1px;height:16px;background:#f0f0f0"></div>
<div style="left:12px;top:0;line-height:16px"><span class="a">39</span></div>
<div style="left:66px;top:0;line-height:16px"><span class="a">0x000...</span></div>
<div style="left:134px;top:0;line-height:16px"><span class="a">SEI_PREFIX&nbsp;(39)</span></div>
<div style="left:285px;top:0;width:62px;text-align:right;line-height:16px"><span class="a">18</span></div>
<div style="left:743px;top:0;line-height:16px"><span class="a">layer_id=0&nbsp;temporal_id=0</span></div>
</div>
<div class="row" style="top:244px;background:#c3c3c3;color:#000">
<div style="left:0;top:16px;width:908px;height:1px;background:#f0f0f0"></div>
<div style="left:54px;top:0;width:1px;height:16px;background:#f0f0f0"></div>
<div style="left:122px;top:0;width:1px;height:16px;background:#f0f0f0"></div>
<div style="left:285px;top:0;width:1px;height:16px;background:#f0f0f0"></div>
<div style="left:353px;top:0;width:1px;height:16px;background:#f0f0f0"></div>
<div style="left:393px;top:0;width:1px;height:16px;background:#f0f0f0"></div>
<div style="left:461px;top:0;width:1px;height:16px;background:#f0f0f0"></div>
<div style="left:542px;top:0;width:1px;height:16px;background:#f0f0f0"></div>
<div style="left:596px;top:0;width:1px;height:16px;background:#f0f0f0"></div>
<div style="left:732px;top:0;width:1px;height:16px;background:#f0f0f0"></div>
<div style="left:12px;top:0;line-height:16px"><span class="a">40</span></div>
<div style="left:66px;top:0;line-height:16px"><span class="a">0x000...</span></div>
<div style="left:134px;top:0;line-height:16px"><span class="a">SEI_PREFIX&nbsp;(39)</span></div>
<div style="left:285px;top:0;width:62px;text-align:right;line-height:16px"><span class="a">18</span></div>
<div style="left:743px;top:0;line-height:16px"><span class="a">layer_id=0&nbsp;temporal_id=0</span></div>
</div>
<div class="row" style="top:261px;background:#cdebf1;color:#f01010">
<div style="left:0;top:16px;width:908px;height:1px;background:#f0f0f0"></div>
<div style="left:54px;top:0;width:1px;height:16px;background:#f0f0f0"></div>
<div style="left:122px;top:0;width:1px;height:16px;background:#f0f0f0"></div>
<div style="left:285px;top:0;width:1px;height:16px;background:#f0f0f0"></div>
<div style="left:353px;top:0;width:1px;height:16px;background:#f0f0f0"></div>
<div style="left:393px;top:0;width:1px;height:16px;background:#f0f0f0"></div>
<div style="left:461px;top:0;width:1px;height:16px;background:#f0f0f0"></div>
<div style="left:542px;top:0;width:1px;height:16px;background:#f0f0f0"></div>
<div style="left:596px;top:0;width:1px;height:16px;background:#f0f0f0"></div>
<div style="left:732px;top:0;width:1px;height:16px;background:#f0f0f0"></div>
<div style="left:12px;top:0;line-height:16px"><span class="a">41</span></div>
<div style="left:66px;top:0;line-height:16px"><span class="a">0x000...</span></div>
<div style="left:134px;top:0;line-height:16px"><span class="a">IDR_W_RADL&nbsp;(19)</span></div>
<div style="left:285px;top:0;width:62px;text-align:right;line-height:16px"><span class="a">361800</span></div>
<div style="left:354px;top:0;width:23px;height:16px;background:#fff"></div>
<svg style="left:361px;top:0" width="16" height="16" viewBox="0 0 16 16"><path d="M2.5 1.5H12.5L14.5 3.5V13.5L12.5 15.5H2.5L0.5 13.5V3.5Z" fill="#fff" stroke="#f00000" stroke-width="1"/><g fill="#f00000"><rect x="5" y="4" width="6" height="1.6"/><rect x="6.5" y="4" width="3" height="9"/><rect x="5" y="11.4" width="6" height="1.6"/></g></svg>
<div style="left:405px;top:0;line-height:16px"><span class="a">Frame</span></div>
<div style="left:473px;top:0;line-height:16px"><span class="a">11&nbsp;(0:0)</span></div>
<div style="left:608px;top:0;line-height:16px"><span class="a">[00:00:00.000](0)</span></div>
<div style="left:743px;top:0;line-height:16px"><span class="a">layer_id=0&nbsp;temporal_id=0</span></div>
</div>
<div class="row" style="top:278px;background:#ffffff;color:#a0a0a0">
<div style="left:0;top:16px;width:908px;height:1px;background:#f0f0f0"></div>
<div style="left:54px;top:0;width:1px;height:16px;background:#f0f0f0"></div>
<div style="left:122px;top:0;width:1px;height:16px;background:#f0f0f0"></div>
<div style="left:285px;top:0;width:1px;height:16px;background:#f0f0f0"></div>
<div style="left:353px;top:0;width:1px;height:16px;background:#f0f0f0"></div>
<div style="left:393px;top:0;width:1px;height:16px;background:#f0f0f0"></div>
<div style="left:461px;top:0;width:1px;height:16px;background:#f0f0f0"></div>
<div style="left:542px;top:0;width:1px;height:16px;background:#f0f0f0"></div>
<div style="left:596px;top:0;width:1px;height:16px;background:#f0f0f0"></div>
<div style="left:732px;top:0;width:1px;height:16px;background:#f0f0f0"></div>
<div style="left:12px;top:0;line-height:16px"><span class="a">42</span></div>
<div style="left:66px;top:0;line-height:16px"><span class="a">0x001...</span></div>
<div style="left:134px;top:0;line-height:16px"><span class="a">AUD&nbsp;(35)</span></div>
<div style="left:285px;top:0;width:62px;text-align:right;line-height:16px"><span class="a">7</span></div>
<div style="left:743px;top:0;line-height:16px"><span class="a">layer_id=0&nbsp;temporal_id=0</span></div>
</div>
<div class="row" style="top:295px;background:#c3c3c3;color:#000">
<div style="left:0;top:16px;width:908px;height:1px;background:#f0f0f0"></div>
<div style="left:54px;top:0;width:1px;height:16px;background:#f0f0f0"></div>
<div style="left:122px;top:0;width:1px;height:16px;background:#f0f0f0"></div>
<div style="left:285px;top:0;width:1px;height:16px;background:#f0f0f0"></div>
<div style="left:353px;top:0;width:1px;height:16px;background:#f0f0f0"></div>
<div style="left:393px;top:0;width:1px;height:16px;background:#f0f0f0"></div>
<div style="left:461px;top:0;width:1px;height:16px;background:#f0f0f0"></div>
<div style="left:542px;top:0;width:1px;height:16px;background:#f0f0f0"></div>
<div style="left:596px;top:0;width:1px;height:16px;background:#f0f0f0"></div>
<div style="left:732px;top:0;width:1px;height:16px;background:#f0f0f0"></div>
<div style="left:12px;top:0;line-height:16px"><span class="a">43</span></div>
<div style="left:66px;top:0;line-height:16px"><span class="a">0x001...</span></div>
<div style="left:134px;top:0;line-height:16px"><span class="a">SEI_PREFIX&nbsp;(39)</span></div>
<div style="left:285px;top:0;width:62px;text-align:right;line-height:16px"><span class="a">19</span></div>
<div style="left:743px;top:0;line-height:16px"><span class="a">layer_id=0&nbsp;temporal_id=0</span></div>
</div>
<div class="row" style="top:312px;background:#ffffff;color:#000">
<div style="left:0;top:16px;width:908px;height:1px;background:#f0f0f0"></div>
<div style="left:54px;top:0;width:1px;height:16px;background:#f0f0f0"></div>
<div style="left:122px;top:0;width:1px;height:16px;background:#f0f0f0"></div>
<div style="left:285px;top:0;width:1px;height:16px;background:#f0f0f0"></div>
<div style="left:353px;top:0;width:1px;height:16px;background:#f0f0f0"></div>
<div style="left:393px;top:0;width:1px;height:16px;background:#f0f0f0"></div>
<div style="left:461px;top:0;width:1px;height:16px;background:#f0f0f0"></div>
<div style="left:542px;top:0;width:1px;height:16px;background:#f0f0f0"></div>
<div style="left:596px;top:0;width:1px;height:16px;background:#f0f0f0"></div>
<div style="left:732px;top:0;width:1px;height:16px;background:#f0f0f0"></div>
<div style="left:12px;top:0;line-height:16px"><span class="a">44</span></div>
<div style="left:66px;top:0;line-height:16px"><span class="a">0x001...</span></div>
<div style="left:134px;top:0;line-height:16px"><span class="a">TRAIL_R&nbsp;(1)</span></div>
<div style="left:285px;top:0;width:62px;text-align:right;line-height:16px"><span class="a">113651</span></div>
<div style="left:354px;top:0;width:23px;height:16px;background:#fff"></div>
<svg style="left:361px;top:0" width="16" height="16" viewBox="0 0 16 16"><path d="M2.5 1.5H12.5L14.5 3.5V13.5L12.5 15.5H2.5L0.5 13.5V3.5Z" fill="#fff" stroke="#0000f0" stroke-width="1"/><g fill="#0000f0"><rect x="5" y="4" width="2" height="9"/><rect x="5" y="4" width="5" height="2"/><rect x="9" y="5" width="2" height="4"/><rect x="5" y="8" width="5" height="2"/></g></svg>
<div style="left:405px;top:0;line-height:16px"><span class="a">Frame</span></div>
<div style="left:473px;top:0;line-height:16px"><span class="a">12&nbsp;(0:0)</span></div>
<div style="left:553px;top:0;line-height:16px"><span class="a">0</span></div>
<div style="left:608px;top:0;line-height:16px"><span class="a">[00:00:00.000](0)</span></div>
<div style="left:743px;top:0;line-height:16px"><span class="a">layer_id=0&nbsp;temporal_id=0</span></div>
</div>
<div class="row" style="top:329px;background:#cdebf1;color:#a0a0a0">
<div style="left:0;top:16px;width:908px;height:1px;background:#f0f0f0"></div>
<div style="left:54px;top:0;width:1px;height:16px;background:#f0f0f0"></div>
<div style="left:122px;top:0;width:1px;height:16px;background:#f0f0f0"></div>
<div style="left:285px;top:0;width:1px;height:16px;background:#f0f0f0"></div>
<div style="left:353px;top:0;width:1px;height:16px;background:#f0f0f0"></div>
<div style="left:393px;top:0;width:1px;height:16px;background:#f0f0f0"></div>
<div style="left:461px;top:0;width:1px;height:16px;background:#f0f0f0"></div>
<div style="left:542px;top:0;width:1px;height:16px;background:#f0f0f0"></div>
<div style="left:596px;top:0;width:1px;height:16px;background:#f0f0f0"></div>
<div style="left:732px;top:0;width:1px;height:16px;background:#f0f0f0"></div>
<div style="left:12px;top:0;line-height:16px"><span class="a">45</span></div>
<div style="left:66px;top:0;line-height:16px"><span class="a">0x001...</span></div>
<div style="left:134px;top:0;line-height:16px"><span class="a">AUD&nbsp;(35)</span></div>
<div style="left:285px;top:0;width:62px;text-align:right;line-height:16px"><span class="a">7</span></div>
<div style="left:743px;top:0;line-height:16px"><span class="a">layer_id=0&nbsp;temporal_id=0</span></div>
</div>
<div class="row" style="top:346px;background:#c3c3c3;color:#000">
<div style="left:0;top:16px;width:908px;height:1px;background:#f0f0f0"></div>
<div style="left:54px;top:0;width:1px;height:16px;background:#f0f0f0"></div>
<div style="left:122px;top:0;width:1px;height:16px;background:#f0f0f0"></div>
<div style="left:285px;top:0;width:1px;height:16px;background:#f0f0f0"></div>
<div style="left:353px;top:0;width:1px;height:16px;background:#f0f0f0"></div>
<div style="left:393px;top:0;width:1px;height:16px;background:#f0f0f0"></div>
<div style="left:461px;top:0;width:1px;height:16px;background:#f0f0f0"></div>
<div style="left:542px;top:0;width:1px;height:16px;background:#f0f0f0"></div>
<div style="left:596px;top:0;width:1px;height:16px;background:#f0f0f0"></div>
<div style="left:732px;top:0;width:1px;height:16px;background:#f0f0f0"></div>
<div style="left:12px;top:0;line-height:16px"><span class="a">46</span></div>
<div style="left:66px;top:0;line-height:16px"><span class="a">0x001...</span></div>
<div style="left:134px;top:0;line-height:16px"><span class="a">SEI_PREFIX&nbsp;(39)</span></div>
<div style="left:285px;top:0;width:62px;text-align:right;line-height:16px"><span class="a">18</span></div>
<div style="left:743px;top:0;line-height:16px"><span class="a">layer_id=0&nbsp;temporal_id=0</span></div>
</div>
<div class="row" style="top:363px;background:#cdebf1;color:#000">
<div style="left:0;top:16px;width:908px;height:1px;background:#f0f0f0"></div>
<div style="left:54px;top:0;width:1px;height:16px;background:#f0f0f0"></div>
<div style="left:122px;top:0;width:1px;height:16px;background:#f0f0f0"></div>
<div style="left:285px;top:0;width:1px;height:16px;background:#f0f0f0"></div>
<div style="left:353px;top:0;width:1px;height:16px;background:#f0f0f0"></div>
<div style="left:393px;top:0;width:1px;height:16px;background:#f0f0f0"></div>
<div style="left:461px;top:0;width:1px;height:16px;background:#f0f0f0"></div>
<div style="left:542px;top:0;width:1px;height:16px;background:#f0f0f0"></div>
<div style="left:596px;top:0;width:1px;height:16px;background:#f0f0f0"></div>
<div style="left:732px;top:0;width:1px;height:16px;background:#f0f0f0"></div>
<div style="left:12px;top:0;line-height:16px"><span class="a">47</span></div>
<div style="left:66px;top:0;line-height:16px"><span class="a">0x001...</span></div>
<div style="left:134px;top:0;line-height:16px"><span class="a">TRAIL_R&nbsp;(1)</span></div>
<div style="left:285px;top:0;width:62px;text-align:right;line-height:16px"><span class="a">38017</span></div>
<div style="left:354px;top:0;width:23px;height:16px;background:#fff"></div>
<svg style="left:361px;top:0" width="16" height="16" viewBox="0 0 16 16"><path d="M2.5 1.5H12.5L14.5 3.5V13.5L12.5 15.5H2.5L0.5 13.5V3.5Z" fill="#fff" stroke="#00c800" stroke-width="1"/><g fill="#00c800"><rect x="4" y="4" width="2" height="9"/><rect x="4" y="4" width="6" height="2"/><rect x="9" y="5" width="2" height="3"/><rect x="4" y="7.5" width="6" height="2"/><rect x="9" y="9" width="2" height="3"/><rect x="4" y="11" width="6" height="2"/></g></svg>
<div style="left:405px;top:0;line-height:16px"><span class="a">Frame</span></div>
<div style="left:473px;top:0;line-height:16px"><span class="a">13&nbsp;(0:0)</span></div>
<div style="left:553px;top:0;line-height:16px"><span class="a">0</span></div>
<div style="left:608px;top:0;line-height:16px"><span class="a">[00:00:00.000](0)</span></div>
<div style="left:743px;top:0;line-height:16px"><span class="a">layer_id=0&nbsp;temporal_id=0</span></div>
</div>
<div class="row" style="top:380px;background:#ffffff;color:#a0a0a0">
<div style="left:0;top:16px;width:908px;height:1px;background:#f0f0f0"></div>
<div style="left:54px;top:0;width:1px;height:16px;background:#f0f0f0"></div>
<div style="left:122px;top:0;width:1px;height:16px;background:#f0f0f0"></div>
<div style="left:285px;top:0;width:1px;height:16px;background:#f0f0f0"></div>
<div style="left:353px;top:0;width:1px;height:16px;background:#f0f0f0"></div>
<div style="left:393px;top:0;width:1px;height:16px;background:#f0f0f0"></div>
<div style="left:461px;top:0;width:1px;height:16px;background:#f0f0f0"></div>
<div style="left:542px;top:0;width:1px;height:16px;background:#f0f0f0"></div>
<div style="left:596px;top:0;width:1px;height:16px;background:#f0f0f0"></div>
<div style="left:732px;top:0;width:1px;height:16px;background:#f0f0f0"></div>
<div style="left:12px;top:0;line-height:16px"><span class="a">48</span></div>
<div style="left:66px;top:0;line-height:16px"><span class="a">0x001...</span></div>
<div style="left:134px;top:0;line-height:16px"><span class="a">AUD&nbsp;(35)</span></div>
<div style="left:285px;top:0;width:62px;text-align:right;line-height:16px"><span class="a">7</span></div>
<div style="left:743px;top:0;line-height:16px"><span class="a">layer_id=0&nbsp;temporal_id=0</span></div>
</div>
<div class="row" style="top:397px;background:#c3c3c3;color:#000">
<div style="left:0;top:16px;width:908px;height:1px;background:#f0f0f0"></div>
<div style="left:54px;top:0;width:1px;height:16px;background:#f0f0f0"></div>
<div style="left:122px;top:0;width:1px;height:16px;background:#f0f0f0"></div>
<div style="left:285px;top:0;width:1px;height:16px;background:#f0f0f0"></div>
<div style="left:353px;top:0;width:1px;height:16px;background:#f0f0f0"></div>
<div style="left:393px;top:0;width:1px;height:16px;background:#f0f0f0"></div>
<div style="left:461px;top:0;width:1px;height:16px;background:#f0f0f0"></div>
<div style="left:542px;top:0;width:1px;height:16px;background:#f0f0f0"></div>
<div style="left:596px;top:0;width:1px;height:16px;background:#f0f0f0"></div>
<div style="left:732px;top:0;width:1px;height:16px;background:#f0f0f0"></div>
<div style="left:12px;top:0;line-height:16px"><span class="a">49</span></div>
<div style="left:66px;top:0;line-height:16px"><span class="a">0x001...</span></div>
<div style="left:134px;top:0;line-height:16px"><span class="a">SEI_PREFIX&nbsp;(39)</span></div>
<div style="left:285px;top:0;width:62px;text-align:right;line-height:16px"><span class="a">18</span></div>
<div style="left:743px;top:0;line-height:16px"><span class="a">layer_id=0&nbsp;temporal_id=0</span></div>
</div>
<div class="row" style="top:414px;background:#ffffff;color:#000">
<div style="left:0;top:16px;width:908px;height:1px;background:#f0f0f0"></div>
<div style="left:54px;top:0;width:1px;height:16px;background:#f0f0f0"></div>
<div style="left:122px;top:0;width:1px;height:16px;background:#f0f0f0"></div>
<div style="left:285px;top:0;width:1px;height:16px;background:#f0f0f0"></div>
<div style="left:353px;top:0;width:1px;height:16px;background:#f0f0f0"></div>
<div style="left:393px;top:0;width:1px;height:16px;background:#f0f0f0"></div>
<div style="left:461px;top:0;width:1px;height:16px;background:#f0f0f0"></div>
<div style="left:542px;top:0;width:1px;height:16px;background:#f0f0f0"></div>
<div style="left:596px;top:0;width:1px;height:16px;background:#f0f0f0"></div>
<div style="left:732px;top:0;width:1px;height:16px;background:#f0f0f0"></div>
<div style="left:12px;top:0;line-height:16px"><span class="a">50</span></div>
<div style="left:66px;top:0;line-height:16px"><span class="a">0x001...</span></div>
<div style="left:134px;top:0;line-height:16px"><span class="a">TRAIL_N&nbsp;(0)</span></div>
<div style="left:285px;top:0;width:62px;text-align:right;line-height:16px"><span class="a">16997</span></div>
<div style="left:354px;top:0;width:23px;height:16px;background:#fff"></div>
<svg style="left:361px;top:0" width="16" height="16" viewBox="0 0 16 16"><path d="M2.5 1.5H12.5L14.5 3.5V13.5L12.5 15.5H2.5L0.5 13.5V3.5Z" fill="#fff" stroke="#00c800" stroke-width="1"/><g fill="#00c800"><rect x="4" y="4" width="2" height="9"/><rect x="4" y="4" width="6" height="2"/><rect x="9" y="5" width="2" height="3"/><rect x="4" y="7.5" width="6" height="2"/><rect x="9" y="9" width="2" height="3"/><rect x="4" y="11" width="6" height="2"/></g></svg>
<div style="left:405px;top:0;line-height:16px"><span class="a">Frame</span></div>
<div style="left:473px;top:0;line-height:16px"><span class="a">14&nbsp;(0:0)</span></div>
<div style="left:608px;top:0;line-height:16px"><span class="a">[00:00:00.000](0)</span></div>
<div style="left:743px;top:0;line-height:16px"><span class="a">layer_id=0&nbsp;temporal_id=0</span></div>
</div>
<div class="row" style="top:431px;background:#cdebf1;color:#a0a0a0">
<div style="left:0;top:16px;width:908px;height:1px;background:#f0f0f0"></div>
<div style="left:54px;top:0;width:1px;height:16px;background:#f0f0f0"></div>
<div style="left:122px;top:0;width:1px;height:16px;background:#f0f0f0"></div>
<div style="left:285px;top:0;width:1px;height:16px;background:#f0f0f0"></div>
<div style="left:353px;top:0;width:1px;height:16px;background:#f0f0f0"></div>
<div style="left:393px;top:0;width:1px;height:16px;background:#f0f0f0"></div>
<div style="left:461px;top:0;width:1px;height:16px;background:#f0f0f0"></div>
<div style="left:542px;top:0;width:1px;height:16px;background:#f0f0f0"></div>
<div style="left:596px;top:0;width:1px;height:16px;background:#f0f0f0"></div>
<div style="left:732px;top:0;width:1px;height:16px;background:#f0f0f0"></div>
<div style="left:12px;top:0;line-height:16px"><span class="a">51</span></div>
<div style="left:66px;top:0;line-height:16px"><span class="a">0x001...</span></div>
<div style="left:134px;top:0;line-height:16px"><span class="a">AUD&nbsp;(35)</span></div>
<div style="left:285px;top:0;width:62px;text-align:right;line-height:16px"><span class="a">7</span></div>
<div style="left:743px;top:0;line-height:16px"><span class="a">layer_id=0&nbsp;temporal_id=0</span></div>
</div>
<div class="row" style="top:448px;background:#c3c3c3;color:#000">
<div style="left:0;top:16px;width:908px;height:1px;background:#f0f0f0"></div>
<div style="left:54px;top:0;width:1px;height:16px;background:#f0f0f0"></div>
<div style="left:122px;top:0;width:1px;height:16px;background:#f0f0f0"></div>
<div style="left:285px;top:0;width:1px;height:16px;background:#f0f0f0"></div>
<div style="left:353px;top:0;width:1px;height:16px;background:#f0f0f0"></div>
<div style="left:393px;top:0;width:1px;height:16px;background:#f0f0f0"></div>
<div style="left:461px;top:0;width:1px;height:16px;background:#f0f0f0"></div>
<div style="left:542px;top:0;width:1px;height:16px;background:#f0f0f0"></div>
<div style="left:596px;top:0;width:1px;height:16px;background:#f0f0f0"></div>
<div style="left:732px;top:0;width:1px;height:16px;background:#f0f0f0"></div>
<div style="left:12px;top:0;line-height:16px"><span class="a">52</span></div>
<div style="left:66px;top:0;line-height:16px"><span class="a">0x001...</span></div>
<div style="left:134px;top:0;line-height:16px"><span class="a">SEI_PREFIX&nbsp;(39)</span></div>
<div style="left:285px;top:0;width:62px;text-align:right;line-height:16px"><span class="a">18</span></div>
<div style="left:743px;top:0;line-height:16px"><span class="a">layer_id=0&nbsp;temporal_id=0</span></div>
</div>
<div class="row" style="top:465px;background:#cdebf1;color:#000">
<div style="left:0;top:16px;width:908px;height:1px;background:#f0f0f0"></div>
<div style="left:54px;top:0;width:1px;height:16px;background:#f0f0f0"></div>
<div style="left:122px;top:0;width:1px;height:16px;background:#f0f0f0"></div>
<div style="left:285px;top:0;width:1px;height:16px;background:#f0f0f0"></div>
<div style="left:353px;top:0;width:1px;height:16px;background:#f0f0f0"></div>
<div style="left:393px;top:0;width:1px;height:16px;background:#f0f0f0"></div>
<div style="left:461px;top:0;width:1px;height:16px;background:#f0f0f0"></div>
<div style="left:542px;top:0;width:1px;height:16px;background:#f0f0f0"></div>
<div style="left:596px;top:0;width:1px;height:16px;background:#f0f0f0"></div>
<div style="left:732px;top:0;width:1px;height:16px;background:#f0f0f0"></div>
<div style="left:12px;top:0;line-height:16px"><span class="a">53</span></div>
<div style="left:66px;top:0;line-height:16px"><span class="a">0x001...</span></div>
<div style="left:134px;top:0;line-height:16px"><span class="a">TRAIL_R&nbsp;(1)</span></div>
<div style="left:285px;top:0;width:62px;text-align:right;line-height:16px"><span class="a">109229</span></div>
<div style="left:354px;top:0;width:23px;height:16px;background:#fff"></div>
<svg style="left:361px;top:0" width="16" height="16" viewBox="0 0 16 16"><path d="M2.5 1.5H12.5L14.5 3.5V13.5L12.5 15.5H2.5L0.5 13.5V3.5Z" fill="#fff" stroke="#0000f0" stroke-width="1"/><g fill="#0000f0"><rect x="5" y="4" width="2" height="9"/><rect x="5" y="4" width="5" height="2"/><rect x="9" y="5" width="2" height="4"/><rect x="5" y="8" width="5" height="2"/></g></svg>
<div style="left:405px;top:0;line-height:16px"><span class="a">Frame</span></div>
<div style="left:473px;top:0;line-height:16px"><span class="a">15&nbsp;(0:0)</span></div>
<div style="left:553px;top:0;line-height:16px"><span class="a">0</span></div>
<div style="left:608px;top:0;line-height:16px"><span class="a">[00:00:00.000](0)</span></div>
<div style="left:743px;top:0;line-height:16px"><span class="a">layer_id=0&nbsp;temporal_id=0</span></div>
</div>
<div class="row" style="top:482px;background:#ffffff;color:#a0a0a0">
<div style="left:0;top:16px;width:908px;height:1px;background:#f0f0f0"></div>
<div style="left:54px;top:0;width:1px;height:16px;background:#f0f0f0"></div>
<div style="left:122px;top:0;width:1px;height:16px;background:#f0f0f0"></div>
<div style="left:285px;top:0;width:1px;height:16px;background:#f0f0f0"></div>
<div style="left:353px;top:0;width:1px;height:16px;background:#f0f0f0"></div>
<div style="left:393px;top:0;width:1px;height:16px;background:#f0f0f0"></div>
<div style="left:461px;top:0;width:1px;height:16px;background:#f0f0f0"></div>
<div style="left:542px;top:0;width:1px;height:16px;background:#f0f0f0"></div>
<div style="left:596px;top:0;width:1px;height:16px;background:#f0f0f0"></div>
<div style="left:732px;top:0;width:1px;height:16px;background:#f0f0f0"></div>
<div style="left:12px;top:0;line-height:16px"><span class="a">54</span></div>
<div style="left:66px;top:0;line-height:16px"><span class="a">0x001...</span></div>
<div style="left:134px;top:0;line-height:16px"><span class="a">AUD&nbsp;(35)</span></div>
<div style="left:285px;top:0;width:62px;text-align:right;line-height:16px"><span class="a">7</span></div>
<div style="left:743px;top:0;line-height:16px"><span class="a">layer_id=0&nbsp;temporal_id=0</span></div>
</div>
<div class="row" style="top:499px;background:#c3c3c3;color:#000">
<div style="left:0;top:16px;width:908px;height:1px;background:#f0f0f0"></div>
<div style="left:54px;top:0;width:1px;height:16px;background:#f0f0f0"></div>
<div style="left:122px;top:0;width:1px;height:16px;background:#f0f0f0"></div>
<div style="left:285px;top:0;width:1px;height:16px;background:#f0f0f0"></div>
<div style="left:353px;top:0;width:1px;height:16px;background:#f0f0f0"></div>
<div style="left:393px;top:0;width:1px;height:16px;background:#f0f0f0"></div>
<div style="left:461px;top:0;width:1px;height:16px;background:#f0f0f0"></div>
<div style="left:542px;top:0;width:1px;height:16px;background:#f0f0f0"></div>
<div style="left:596px;top:0;width:1px;height:16px;background:#f0f0f0"></div>
<div style="left:732px;top:0;width:1px;height:16px;background:#f0f0f0"></div>
<div style="left:12px;top:0;line-height:16px"><span class="a">55</span></div>
<div style="left:66px;top:0;line-height:16px"><span class="a">0x001...</span></div>
<div style="left:134px;top:0;line-height:16px"><span class="a">SEI_PREFIX&nbsp;(39)</span></div>
<div style="left:285px;top:0;width:62px;text-align:right;line-height:16px"><span class="a">18</span></div>
<div style="left:743px;top:0;line-height:16px"><span class="a">layer_id=0&nbsp;temporal_id=0</span></div>
</div>
<div class="row" style="top:516px;background:#ffffff;color:#000">
<div style="left:0;top:16px;width:908px;height:1px;background:#f0f0f0"></div>
<div style="left:54px;top:0;width:1px;height:16px;background:#f0f0f0"></div>
<div style="left:122px;top:0;width:1px;height:16px;background:#f0f0f0"></div>
<div style="left:285px;top:0;width:1px;height:16px;background:#f0f0f0"></div>
<div style="left:353px;top:0;width:1px;height:16px;background:#f0f0f0"></div>
<div style="left:393px;top:0;width:1px;height:16px;background:#f0f0f0"></div>
<div style="left:461px;top:0;width:1px;height:16px;background:#f0f0f0"></div>
<div style="left:542px;top:0;width:1px;height:16px;background:#f0f0f0"></div>
<div style="left:596px;top:0;width:1px;height:16px;background:#f0f0f0"></div>
<div style="left:732px;top:0;width:1px;height:16px;background:#f0f0f0"></div>
<div style="left:12px;top:0;line-height:16px"><span class="a">56</span></div>
<div style="left:66px;top:0;line-height:16px"><span class="a">0x001...</span></div>
<div style="left:134px;top:0;line-height:16px"><span class="a">TRAIL_R&nbsp;(1)</span></div>
<div style="left:285px;top:0;width:62px;text-align:right;line-height:16px"><span class="a">44810</span></div>
<div style="left:354px;top:0;width:23px;height:16px;background:#fff"></div>
<svg style="left:361px;top:0" width="16" height="16" viewBox="0 0 16 16"><path d="M2.5 1.5H12.5L14.5 3.5V13.5L12.5 15.5H2.5L0.5 13.5V3.5Z" fill="#fff" stroke="#00c800" stroke-width="1"/><g fill="#00c800"><rect x="4" y="4" width="2" height="9"/><rect x="4" y="4" width="6" height="2"/><rect x="9" y="5" width="2" height="3"/><rect x="4" y="7.5" width="6" height="2"/><rect x="9" y="9" width="2" height="3"/><rect x="4" y="11" width="6" height="2"/></g></svg>
<div style="left:405px;top:0;line-height:16px"><span class="a">Frame</span></div>
<div style="left:473px;top:0;line-height:16px"><span class="a">16&nbsp;(0:0)</span></div>
<div style="left:553px;top:0;line-height:16px"><span class="a">0</span></div>
<div style="left:608px;top:0;line-height:16px"><span class="a">[00:00:00.000](0)</span></div>
<div style="left:743px;top:0;line-height:16px"><span class="a">layer_id=0&nbsp;temporal_id=0</span></div>
</div>
<div class="row" style="top:533px;background:#cdebf1;color:#a0a0a0">
<div style="left:0;top:16px;width:908px;height:1px;background:#f0f0f0"></div>
<div style="left:54px;top:0;width:1px;height:16px;background:#f0f0f0"></div>
<div style="left:122px;top:0;width:1px;height:16px;background:#f0f0f0"></div>
<div style="left:285px;top:0;width:1px;height:16px;background:#f0f0f0"></div>
<div style="left:353px;top:0;width:1px;height:16px;background:#f0f0f0"></div>
<div style="left:393px;top:0;width:1px;height:16px;background:#f0f0f0"></div>
<div style="left:461px;top:0;width:1px;height:16px;background:#f0f0f0"></div>
<div style="left:542px;top:0;width:1px;height:16px;background:#f0f0f0"></div>
<div style="left:596px;top:0;width:1px;height:16px;background:#f0f0f0"></div>
<div style="left:732px;top:0;width:1px;height:16px;background:#f0f0f0"></div>
<div style="left:12px;top:0;line-height:16px"><span class="a">57</span></div>
<div style="left:66px;top:0;line-height:16px"><span class="a">0x001...</span></div>
<div style="left:134px;top:0;line-height:16px"><span class="a">AUD&nbsp;(35)</span></div>
<div style="left:285px;top:0;width:62px;text-align:right;line-height:16px"><span class="a">7</span></div>
<div style="left:743px;top:0;line-height:16px"><span class="a">layer_id=0&nbsp;temporal_id=0</span></div>
</div>
<div class="row" style="top:550px;background:#c3c3c3;color:#000">
<div style="left:0;top:16px;width:908px;height:1px;background:#f0f0f0"></div>
<div style="left:54px;top:0;width:1px;height:16px;background:#f0f0f0"></div>
<div style="left:122px;top:0;width:1px;height:16px;background:#f0f0f0"></div>
<div style="left:285px;top:0;width:1px;height:16px;background:#f0f0f0"></div>
<div style="left:353px;top:0;width:1px;height:16px;background:#f0f0f0"></div>
<div style="left:393px;top:0;width:1px;height:16px;background:#f0f0f0"></div>
<div style="left:461px;top:0;width:1px;height:16px;background:#f0f0f0"></div>
<div style="left:542px;top:0;width:1px;height:16px;background:#f0f0f0"></div>
<div style="left:596px;top:0;width:1px;height:16px;background:#f0f0f0"></div>
<div style="left:732px;top:0;width:1px;height:16px;background:#f0f0f0"></div>
<div style="left:12px;top:0;line-height:16px"><span class="a">58</span></div>
<div style="left:66px;top:0;line-height:16px"><span class="a">0x001...</span></div>
<div style="left:134px;top:0;line-height:16px"><span class="a">SEI_PREFIX&nbsp;(39)</span></div>
<div style="left:285px;top:0;width:62px;text-align:right;line-height:16px"><span class="a">18</span></div>
<div style="left:743px;top:0;line-height:16px"><span class="a">layer_id=0&nbsp;temporal_id=0</span></div>
</div>
<div class="row" style="top:567px;background:#cdebf1;color:#000">
<div style="left:0;top:16px;width:908px;height:1px;background:#f0f0f0"></div>
<div style="left:54px;top:0;width:1px;height:16px;background:#f0f0f0"></div>
<div style="left:122px;top:0;width:1px;height:16px;background:#f0f0f0"></div>
<div style="left:285px;top:0;width:1px;height:16px;background:#f0f0f0"></div>
<div style="left:353px;top:0;width:1px;height:16px;background:#f0f0f0"></div>
<div style="left:393px;top:0;width:1px;height:16px;background:#f0f0f0"></div>
<div style="left:461px;top:0;width:1px;height:16px;background:#f0f0f0"></div>
<div style="left:542px;top:0;width:1px;height:16px;background:#f0f0f0"></div>
<div style="left:596px;top:0;width:1px;height:16px;background:#f0f0f0"></div>
<div style="left:732px;top:0;width:1px;height:16px;background:#f0f0f0"></div>
<div style="left:12px;top:0;line-height:16px"><span class="a">59</span></div>
<div style="left:66px;top:0;line-height:16px"><span class="a">0x001...</span></div>
<div style="left:134px;top:0;line-height:16px"><span class="a">TRAIL_N&nbsp;(0)</span></div>
<div style="left:285px;top:0;width:62px;text-align:right;line-height:16px"><span class="a">17416</span></div>
<div style="left:354px;top:0;width:23px;height:16px;background:#fff"></div>
<svg style="left:361px;top:0" width="16" height="16" viewBox="0 0 16 16"><path d="M2.5 1.5H12.5L14.5 3.5V13.5L12.5 15.5H2.5L0.5 13.5V3.5Z" fill="#fff" stroke="#00c800" stroke-width="1"/><g fill="#00c800"><rect x="4" y="4" width="2" height="9"/><rect x="4" y="4" width="6" height="2"/><rect x="9" y="5" width="2" height="3"/><rect x="4" y="7.5" width="6" height="2"/><rect x="9" y="9" width="2" height="3"/><rect x="4" y="11" width="6" height="2"/></g></svg>
<div style="left:405px;top:0;line-height:16px"><span class="a">Frame</span></div>
<div style="left:473px;top:0;line-height:16px"><span class="a">17&nbsp;(0:0)</span></div>
<div style="left:608px;top:0;line-height:16px"><span class="a">[00:00:00.000](0)</span></div>
<div style="left:743px;top:0;line-height:16px"><span class="a">layer_id=0&nbsp;temporal_id=0</span></div>
</div>
<div class="row" style="top:584px;background:#ffffff;color:#a0a0a0">
<div style="left:0;top:16px;width:908px;height:1px;background:#f0f0f0"></div>
<div style="left:54px;top:0;width:1px;height:16px;background:#f0f0f0"></div>
<div style="left:122px;top:0;width:1px;height:16px;background:#f0f0f0"></div>
<div style="left:285px;top:0;width:1px;height:16px;background:#f0f0f0"></div>
<div style="left:353px;top:0;width:1px;height:16px;background:#f0f0f0"></div>
<div style="left:393px;top:0;width:1px;height:16px;background:#f0f0f0"></div>
<div style="left:461px;top:0;width:1px;height:16px;background:#f0f0f0"></div>
<div style="left:542px;top:0;width:1px;height:16px;background:#f0f0f0"></div>
<div style="left:596px;top:0;width:1px;height:16px;background:#f0f0f0"></div>
<div style="left:732px;top:0;width:1px;height:16px;background:#f0f0f0"></div>
<div style="left:12px;top:0;line-height:16px"><span class="a">60</span></div>
<div style="left:66px;top:0;line-height:16px"><span class="a">0x001...</span></div>
<div style="left:134px;top:0;line-height:16px"><span class="a">AUD&nbsp;(35)</span></div>
<div style="left:285px;top:0;width:62px;text-align:right;line-height:16px"><span class="a">7</span></div>
<div style="left:743px;top:0;line-height:16px"><span class="a">layer_id=0&nbsp;temporal_id=0</span></div>
</div>
<div class="row" style="top:601px;background:#c3c3c3;color:#000">
<div style="left:0;top:16px;width:908px;height:1px;background:#f0f0f0"></div>
<div style="left:54px;top:0;width:1px;height:16px;background:#f0f0f0"></div>
<div style="left:122px;top:0;width:1px;height:16px;background:#f0f0f0"></div>
<div style="left:285px;top:0;width:1px;height:16px;background:#f0f0f0"></div>
<div style="left:353px;top:0;width:1px;height:16px;background:#f0f0f0"></div>
<div style="left:393px;top:0;width:1px;height:16px;background:#f0f0f0"></div>
<div style="left:461px;top:0;width:1px;height:16px;background:#f0f0f0"></div>
<div style="left:542px;top:0;width:1px;height:16px;background:#f0f0f0"></div>
<div style="left:596px;top:0;width:1px;height:16px;background:#f0f0f0"></div>
<div style="left:732px;top:0;width:1px;height:16px;background:#f0f0f0"></div>
<div style="left:12px;top:0;line-height:16px"><span class="a">61</span></div>
<div style="left:66px;top:0;line-height:16px"><span class="a">0x001...</span></div>
<div style="left:134px;top:0;line-height:16px"><span class="a">SEI_PREFIX&nbsp;(39)</span></div>
<div style="left:285px;top:0;width:62px;text-align:right;line-height:16px"><span class="a">18</span></div>
<div style="left:743px;top:0;line-height:16px"><span class="a">layer_id=0&nbsp;temporal_id=0</span></div>
</div>
<div class="row" style="top:618px;background:#ffffff;color:#000">
<div style="left:0;top:16px;width:908px;height:1px;background:#f0f0f0"></div>
<div style="left:54px;top:0;width:1px;height:16px;background:#f0f0f0"></div>
<div style="left:122px;top:0;width:1px;height:16px;background:#f0f0f0"></div>
<div style="left:285px;top:0;width:1px;height:16px;background:#f0f0f0"></div>
<div style="left:353px;top:0;width:1px;height:16px;background:#f0f0f0"></div>
<div style="left:393px;top:0;width:1px;height:16px;background:#f0f0f0"></div>
<div style="left:461px;top:0;width:1px;height:16px;background:#f0f0f0"></div>
<div style="left:542px;top:0;width:1px;height:16px;background:#f0f0f0"></div>
<div style="left:596px;top:0;width:1px;height:16px;background:#f0f0f0"></div>
<div style="left:732px;top:0;width:1px;height:16px;background:#f0f0f0"></div>
<div style="left:12px;top:0;line-height:16px"><span class="a">62</span></div>
<div style="left:66px;top:0;line-height:16px"><span class="a">0x001...</span></div>
<div style="left:134px;top:0;line-height:16px"><span class="a">TRAIL_R&nbsp;(1)</span></div>
<div style="left:285px;top:0;width:62px;text-align:right;line-height:16px"><span class="a">111381</span></div>
<div style="left:354px;top:0;width:23px;height:16px;background:#fff"></div>
<svg style="left:361px;top:0" width="16" height="16" viewBox="0 0 16 16"><path d="M2.5 1.5H12.5L14.5 3.5V13.5L12.5 15.5H2.5L0.5 13.5V3.5Z" fill="#fff" stroke="#0000f0" stroke-width="1"/><g fill="#0000f0"><rect x="5" y="4" width="2" height="9"/><rect x="5" y="4" width="5" height="2"/><rect x="9" y="5" width="2" height="4"/><rect x="5" y="8" width="5" height="2"/></g></svg>
<div style="left:405px;top:0;line-height:16px"><span class="a">Frame</span></div>
<div style="left:473px;top:0;line-height:16px"><span class="a">18&nbsp;(0:0)</span></div>
<div style="left:553px;top:0;line-height:16px"><span class="a">0</span></div>
<div style="left:608px;top:0;line-height:16px"><span class="a">[00:00:00.000](0)</span></div>
<div style="left:743px;top:0;line-height:16px"><span class="a">layer_id=0&nbsp;temporal_id=0</span></div>
</div>
<div class="row" style="top:635px;background:#cdebf1;color:#a0a0a0">
<div style="left:0;top:16px;width:908px;height:1px;background:#f0f0f0"></div>
<div style="left:54px;top:0;width:1px;height:16px;background:#f0f0f0"></div>
<div style="left:122px;top:0;width:1px;height:16px;background:#f0f0f0"></div>
<div style="left:285px;top:0;width:1px;height:16px;background:#f0f0f0"></div>
<div style="left:353px;top:0;width:1px;height:16px;background:#f0f0f0"></div>
<div style="left:393px;top:0;width:1px;height:16px;background:#f0f0f0"></div>
<div style="left:461px;top:0;width:1px;height:16px;background:#f0f0f0"></div>
<div style="left:542px;top:0;width:1px;height:16px;background:#f0f0f0"></div>
<div style="left:596px;top:0;width:1px;height:16px;background:#f0f0f0"></div>
<div style="left:732px;top:0;width:1px;height:16px;background:#f0f0f0"></div>
<div style="left:12px;top:0;line-height:16px"><span class="a">63</span></div>
<div style="left:66px;top:0;line-height:16px"><span class="a">0x001...</span></div>
<div style="left:134px;top:0;line-height:16px"><span class="a">AUD&nbsp;(35)</span></div>
<div style="left:285px;top:0;width:62px;text-align:right;line-height:16px"><span class="a">7</span></div>
<div style="left:743px;top:0;line-height:16px"><span class="a">layer_id=0&nbsp;temporal_id=0</span></div>
</div>
<div class="row" style="top:652px;background:#c3c3c3;color:#000">
<div style="left:0;top:16px;width:908px;height:1px;background:#f0f0f0"></div>
<div style="left:54px;top:0;width:1px;height:16px;background:#f0f0f0"></div>
<div style="left:122px;top:0;width:1px;height:16px;background:#f0f0f0"></div>
<div style="left:285px;top:0;width:1px;height:16px;background:#f0f0f0"></div>
<div style="left:353px;top:0;width:1px;height:16px;background:#f0f0f0"></div>
<div style="left:393px;top:0;width:1px;height:16px;background:#f0f0f0"></div>
<div style="left:461px;top:0;width:1px;height:16px;background:#f0f0f0"></div>
<div style="left:542px;top:0;width:1px;height:16px;background:#f0f0f0"></div>
<div style="left:596px;top:0;width:1px;height:16px;background:#f0f0f0"></div>
<div style="left:732px;top:0;width:1px;height:16px;background:#f0f0f0"></div>
<div style="left:12px;top:0;line-height:16px"><span class="a">64</span></div>
<div style="left:66px;top:0;line-height:16px"><span class="a">0x001...</span></div>
<div style="left:134px;top:0;line-height:16px"><span class="a">SEI_PREFIX&nbsp;(39)</span></div>
<div style="left:285px;top:0;width:62px;text-align:right;line-height:16px"><span class="a">18</span></div>
<div style="left:743px;top:0;line-height:16px"><span class="a">layer_id=0&nbsp;temporal_id=0</span></div>
</div>
<div class="row" style="top:669px;background:#cdebf1;color:#000">
<div style="left:0;top:16px;width:908px;height:1px;background:#f0f0f0"></div>
<div style="left:54px;top:0;width:1px;height:16px;background:#f0f0f0"></div>
<div style="left:122px;top:0;width:1px;height:16px;background:#f0f0f0"></div>
<div style="left:285px;top:0;width:1px;height:16px;background:#f0f0f0"></div>
<div style="left:353px;top:0;width:1px;height:16px;background:#f0f0f0"></div>
<div style="left:393px;top:0;width:1px;height:16px;background:#f0f0f0"></div>
<div style="left:461px;top:0;width:1px;height:16px;background:#f0f0f0"></div>
<div style="left:542px;top:0;width:1px;height:16px;background:#f0f0f0"></div>
<div style="left:596px;top:0;width:1px;height:16px;background:#f0f0f0"></div>
<div style="left:732px;top:0;width:1px;height:16px;background:#f0f0f0"></div>
<div style="left:12px;top:0;line-height:16px"><span class="a">65</span></div>
<div style="left:66px;top:0;line-height:16px"><span class="a">0x001...</span></div>
<div style="left:134px;top:0;line-height:16px"><span class="a">TRAIL_R&nbsp;(1)</span></div>
<div style="left:285px;top:0;width:62px;text-align:right;line-height:16px"><span class="a">46077</span></div>
<div style="left:354px;top:0;width:23px;height:16px;background:#fff"></div>
<svg style="left:361px;top:0" width="16" height="16" viewBox="0 0 16 16"><path d="M2.5 1.5H12.5L14.5 3.5V13.5L12.5 15.5H2.5L0.5 13.5V3.5Z" fill="#fff" stroke="#00c800" stroke-width="1"/><g fill="#00c800"><rect x="4" y="4" width="2" height="9"/><rect x="4" y="4" width="6" height="2"/><rect x="9" y="5" width="2" height="3"/><rect x="4" y="7.5" width="6" height="2"/><rect x="9" y="9" width="2" height="3"/><rect x="4" y="11" width="6" height="2"/></g></svg>
<div style="left:405px;top:0;line-height:16px"><span class="a">Frame</span></div>
<div style="left:473px;top:0;line-height:16px"><span class="a">19&nbsp;(0:0)</span></div>
<div style="left:553px;top:0;line-height:16px"><span class="a">0</span></div>
<div style="left:608px;top:0;line-height:16px"><span class="a">[00:00:00.000](0)</span></div>
<div style="left:743px;top:0;line-height:16px"><span class="a">layer_id=0&nbsp;temporal_id=0</span></div>
</div>
<div class="row" style="top:686px;background:#ffffff;color:#a0a0a0">
<div style="left:0;top:16px;width:908px;height:1px;background:#f0f0f0"></div>
<div style="left:54px;top:0;width:1px;height:16px;background:#f0f0f0"></div>
<div style="left:122px;top:0;width:1px;height:16px;background:#f0f0f0"></div>
<div style="left:285px;top:0;width:1px;height:16px;background:#f0f0f0"></div>
<div style="left:353px;top:0;width:1px;height:16px;background:#f0f0f0"></div>
<div style="left:393px;top:0;width:1px;height:16px;background:#f0f0f0"></div>
<div style="left:461px;top:0;width:1px;height:16px;background:#f0f0f0"></div>
<div style="left:542px;top:0;width:1px;height:16px;background:#f0f0f0"></div>
<div style="left:596px;top:0;width:1px;height:16px;background:#f0f0f0"></div>
<div style="left:732px;top:0;width:1px;height:16px;background:#f0f0f0"></div>
<div style="left:12px;top:0;line-height:16px"><span class="a">66</span></div>
<div style="left:66px;top:0;line-height:16px"><span class="a">0x001...</span></div>
<div style="left:134px;top:0;line-height:16px"><span class="a">AUD&nbsp;(35)</span></div>
<div style="left:285px;top:0;width:62px;text-align:right;line-height:16px"><span class="a">7</span></div>
<div style="left:743px;top:0;line-height:16px"><span class="a">layer_id=0&nbsp;temporal_id=0</span></div>
</div>
<div class="row" style="top:703px;background:#c3c3c3;color:#000">
<div style="left:0;top:16px;width:908px;height:1px;background:#f0f0f0"></div>
<div style="left:54px;top:0;width:1px;height:16px;background:#f0f0f0"></div>
<div style="left:122px;top:0;width:1px;height:16px;background:#f0f0f0"></div>
<div style="left:285px;top:0;width:1px;height:16px;background:#f0f0f0"></div>
<div style="left:353px;top:0;width:1px;height:16px;background:#f0f0f0"></div>
<div style="left:393px;top:0;width:1px;height:16px;background:#f0f0f0"></div>
<div style="left:461px;top:0;width:1px;height:16px;background:#f0f0f0"></div>
<div style="left:542px;top:0;width:1px;height:16px;background:#f0f0f0"></div>
<div style="left:596px;top:0;width:1px;height:16px;background:#f0f0f0"></div>
<div style="left:732px;top:0;width:1px;height:16px;background:#f0f0f0"></div>
<div style="left:12px;top:0;line-height:16px"><span class="a">67</span></div>
<div style="left:66px;top:0;line-height:16px"><span class="a">0x001...</span></div>
<div style="left:134px;top:0;line-height:16px"><span class="a">SEI_PREFIX&nbsp;(39)</span></div>
<div style="left:285px;top:0;width:62px;text-align:right;line-height:16px"><span class="a">18</span></div>
<div style="left:743px;top:0;line-height:16px"><span class="a">layer_id=0&nbsp;temporal_id=0</span></div>
</div>
<div class="row" style="top:720px;background:#ffffff;color:#000">
<div style="left:0;top:16px;width:908px;height:1px;background:#f0f0f0"></div>
<div style="left:54px;top:0;width:1px;height:16px;background:#f0f0f0"></div>
<div style="left:122px;top:0;width:1px;height:16px;background:#f0f0f0"></div>
<div style="left:285px;top:0;width:1px;height:16px;background:#f0f0f0"></div>
<div style="left:353px;top:0;width:1px;height:16px;background:#f0f0f0"></div>
<div style="left:393px;top:0;width:1px;height:16px;background:#f0f0f0"></div>
<div style="left:461px;top:0;width:1px;height:16px;background:#f0f0f0"></div>
<div style="left:542px;top:0;width:1px;height:16px;background:#f0f0f0"></div>
<div style="left:596px;top:0;width:1px;height:16px;background:#f0f0f0"></div>
<div style="left:732px;top:0;width:1px;height:16px;background:#f0f0f0"></div>
<div style="left:12px;top:0;line-height:16px"><span class="a">68</span></div>
<div style="left:66px;top:0;line-height:16px"><span class="a">0x001...</span></div>
<div style="left:134px;top:0;line-height:16px"><span class="a">TRAIL_N&nbsp;(0)</span></div>
<div style="left:285px;top:0;width:62px;text-align:right;line-height:16px"><span class="a">20100</span></div>
<div style="left:354px;top:0;width:23px;height:16px;background:#fff"></div>
<svg style="left:361px;top:0" width="16" height="16" viewBox="0 0 16 16"><path d="M2.5 1.5H12.5L14.5 3.5V13.5L12.5 15.5H2.5L0.5 13.5V3.5Z" fill="#fff" stroke="#00c800" stroke-width="1"/><g fill="#00c800"><rect x="4" y="4" width="2" height="9"/><rect x="4" y="4" width="6" height="2"/><rect x="9" y="5" width="2" height="3"/><rect x="4" y="7.5" width="6" height="2"/><rect x="9" y="9" width="2" height="3"/><rect x="4" y="11" width="6" height="2"/></g></svg>
<div style="left:405px;top:0;line-height:16px"><span class="a">Frame</span></div>
<div style="left:473px;top:0;line-height:16px"><span class="a">20&nbsp;(0:0)</span></div>
<div style="left:608px;top:0;line-height:16px"><span class="a">[00:00:00.000](0)</span></div>
<div style="left:743px;top:0;line-height:16px"><span class="a">layer_id=0&nbsp;temporal_id=0</span></div>
</div>
<div class="row" style="top:737px;background:#cdebf1;color:#a0a0a0">
<div style="left:0;top:16px;width:908px;height:1px;background:#f0f0f0"></div>
<div style="left:54px;top:0;width:1px;height:16px;background:#f0f0f0"></div>
<div style="left:122px;top:0;width:1px;height:16px;background:#f0f0f0"></div>
<div style="left:285px;top:0;width:1px;height:16px;background:#f0f0f0"></div>
<div style="left:353px;top:0;width:1px;height:16px;background:#f0f0f0"></div>
<div style="left:393px;top:0;width:1px;height:16px;background:#f0f0f0"></div>
<div style="left:461px;top:0;width:1px;height:16px;background:#f0f0f0"></div>
<div style="left:542px;top:0;width:1px;height:16px;background:#f0f0f0"></div>
<div style="left:596px;top:0;width:1px;height:16px;background:#f0f0f0"></div>
<div style="left:732px;top:0;width:1px;height:16px;background:#f0f0f0"></div>
<div style="left:12px;top:0;line-height:16px"><span class="a">69</span></div>
<div style="left:66px;top:0;line-height:16px"><span class="a">0x001...</span></div>
<div style="left:134px;top:0;line-height:16px"><span class="a">AUD&nbsp;(35)</span></div>
<div style="left:285px;top:0;width:62px;text-align:right;line-height:16px"><span class="a">7</span></div>
<div style="left:743px;top:0;line-height:16px"><span class="a">layer_id=0&nbsp;temporal_id=0</span></div>
</div>
<div class="row" style="top:754px;background:#c3c3c3;color:#000">
<div style="left:0;top:16px;width:908px;height:1px;background:#f0f0f0"></div>
<div style="left:54px;top:0;width:1px;height:16px;background:#f0f0f0"></div>
<div style="left:122px;top:0;width:1px;height:16px;background:#f0f0f0"></div>
<div style="left:285px;top:0;width:1px;height:16px;background:#f0f0f0"></div>
<div style="left:353px;top:0;width:1px;height:16px;background:#f0f0f0"></div>
<div style="left:393px;top:0;width:1px;height:16px;background:#f0f0f0"></div>
<div style="left:461px;top:0;width:1px;height:16px;background:#f0f0f0"></div>
<div style="left:542px;top:0;width:1px;height:16px;background:#f0f0f0"></div>
<div style="left:596px;top:0;width:1px;height:16px;background:#f0f0f0"></div>
<div style="left:732px;top:0;width:1px;height:16px;background:#f0f0f0"></div>
<div style="left:12px;top:0;line-height:16px"><span class="a">70</span></div>
<div style="left:66px;top:0;line-height:16px"><span class="a">0x001...</span></div>
<div style="left:134px;top:0;line-height:16px"><span class="a">SEI_PREFIX&nbsp;(39)</span></div>
<div style="left:285px;top:0;width:62px;text-align:right;line-height:16px"><span class="a">18</span></div>
<div style="left:743px;top:0;line-height:16px"><span class="a">layer_id=0&nbsp;temporal_id=0</span></div>
</div>
<div class="row" style="top:771px;background:#cdebf1;color:#000">
<div style="left:0;top:16px;width:908px;height:1px;background:#f0f0f0"></div>
<div style="left:54px;top:0;width:1px;height:16px;background:#f0f0f0"></div>
<div style="left:122px;top:0;width:1px;height:16px;background:#f0f0f0"></div>
<div style="left:285px;top:0;width:1px;height:16px;background:#f0f0f0"></div>
<div style="left:353px;top:0;width:1px;height:16px;background:#f0f0f0"></div>
<div style="left:393px;top:0;width:1px;height:16px;background:#f0f0f0"></div>
<div style="left:461px;top:0;width:1px;height:16px;background:#f0f0f0"></div>
<div style="left:542px;top:0;width:1px;height:16px;background:#f0f0f0"></div>
<div style="left:596px;top:0;width:1px;height:16px;background:#f0f0f0"></div>
<div style="left:732px;top:0;width:1px;height:16px;background:#f0f0f0"></div>
<div style="left:12px;top:0;line-height:16px"><span class="a">71</span></div>
<div style="left:66px;top:0;line-height:16px"><span class="a">0x001...</span></div>
<div style="left:134px;top:0;line-height:16px"><span class="a">TRAIL_R&nbsp;(1)</span></div>
<div style="left:285px;top:0;width:62px;text-align:right;line-height:16px"><span class="a">85693</span></div>
<div style="left:354px;top:0;width:23px;height:16px;background:#fff"></div>
<svg style="left:361px;top:0" width="16" height="16" viewBox="0 0 16 16"><path d="M2.5 1.5H12.5L14.5 3.5V13.5L12.5 15.5H2.5L0.5 13.5V3.5Z" fill="#fff" stroke="#0000f0" stroke-width="1"/><g fill="#0000f0"><rect x="5" y="4" width="2" height="9"/><rect x="5" y="4" width="5" height="2"/><rect x="9" y="5" width="2" height="4"/><rect x="5" y="8" width="5" height="2"/></g></svg>
<div style="left:405px;top:0;line-height:16px"><span class="a">Frame</span></div>
<div style="left:473px;top:0;line-height:16px"><span class="a">21&nbsp;(0:0)</span></div>
<div style="left:553px;top:0;line-height:16px"><span class="a">0</span></div>
<div style="left:608px;top:0;line-height:16px"><span class="a">[00:00:00.000](0)</span></div>
<div style="left:743px;top:0;line-height:16px"><span class="a">layer_id=0&nbsp;temporal_id=0</span></div>
</div>
<div class="row" style="top:788px;background:#ffffff;color:#a0a0a0">
<div style="left:0;top:16px;width:908px;height:1px;background:#f0f0f0"></div>
<div style="left:54px;top:0;width:1px;height:16px;background:#f0f0f0"></div>
<div style="left:122px;top:0;width:1px;height:16px;background:#f0f0f0"></div>
<div style="left:285px;top:0;width:1px;height:16px;background:#f0f0f0"></div>
<div style="left:353px;top:0;width:1px;height:16px;background:#f0f0f0"></div>
<div style="left:393px;top:0;width:1px;height:16px;background:#f0f0f0"></div>
<div style="left:461px;top:0;width:1px;height:16px;background:#f0f0f0"></div>
<div style="left:542px;top:0;width:1px;height:16px;background:#f0f0f0"></div>
<div style="left:596px;top:0;width:1px;height:16px;background:#f0f0f0"></div>
<div style="left:732px;top:0;width:1px;height:16px;background:#f0f0f0"></div>
<div style="left:12px;top:0;line-height:16px"><span class="a">72</span></div>
<div style="left:66px;top:0;line-height:16px"><span class="a">0x001...</span></div>
<div style="left:134px;top:0;line-height:16px"><span class="a">AUD&nbsp;(35)</span></div>
<div style="left:285px;top:0;width:62px;text-align:right;line-height:16px"><span class="a">7</span></div>
<div style="left:743px;top:0;line-height:16px"><span class="a">layer_id=0&nbsp;temporal_id=0</span></div>
</div>
<div class="row" style="top:805px;background:#c3c3c3;color:#000">
<div style="left:0;top:16px;width:908px;height:1px;background:#f0f0f0"></div>
<div style="left:54px;top:0;width:1px;height:16px;background:#f0f0f0"></div>
<div style="left:122px;top:0;width:1px;height:16px;background:#f0f0f0"></div>
<div style="left:285px;top:0;width:1px;height:16px;background:#f0f0f0"></div>
<div style="left:353px;top:0;width:1px;height:16px;background:#f0f0f0"></div>
<div style="left:393px;top:0;width:1px;height:16px;background:#f0f0f0"></div>
<div style="left:461px;top:0;width:1px;height:16px;background:#f0f0f0"></div>
<div style="left:542px;top:0;width:1px;height:16px;background:#f0f0f0"></div>
<div style="left:596px;top:0;width:1px;height:16px;background:#f0f0f0"></div>
<div style="left:732px;top:0;width:1px;height:16px;background:#f0f0f0"></div>
<div style="left:12px;top:0;line-height:16px"><span class="a">73</span></div>
<div style="left:66px;top:0;line-height:16px"><span class="a">0x001...</span></div>
<div style="left:134px;top:0;line-height:16px"><span class="a">SEI_PREFIX&nbsp;(39)</span></div>
<div style="left:285px;top:0;width:62px;text-align:right;line-height:16px"><span class="a">18</span></div>
<div style="left:743px;top:0;line-height:16px"><span class="a">layer_id=0&nbsp;temporal_id=0</span></div>
</div>
<svg style="left:0;top:0" width="1345" height="819" viewBox="0 0 1345 819"><path d="M142.5 265.5L120.2 282.7 122.1 288 108.5 288 115.3 276 118 279.3z" fill="#f51e1e"/></svg>
<svg style="left:0;top:0" width="1345" height="819" viewBox="0 0 1345 819"><path d="M353 355L402.5 384 400 389.5 415 388.5 409 378 404.4 380.5z" fill="#f51e1e"/></svg>
</body></html>
